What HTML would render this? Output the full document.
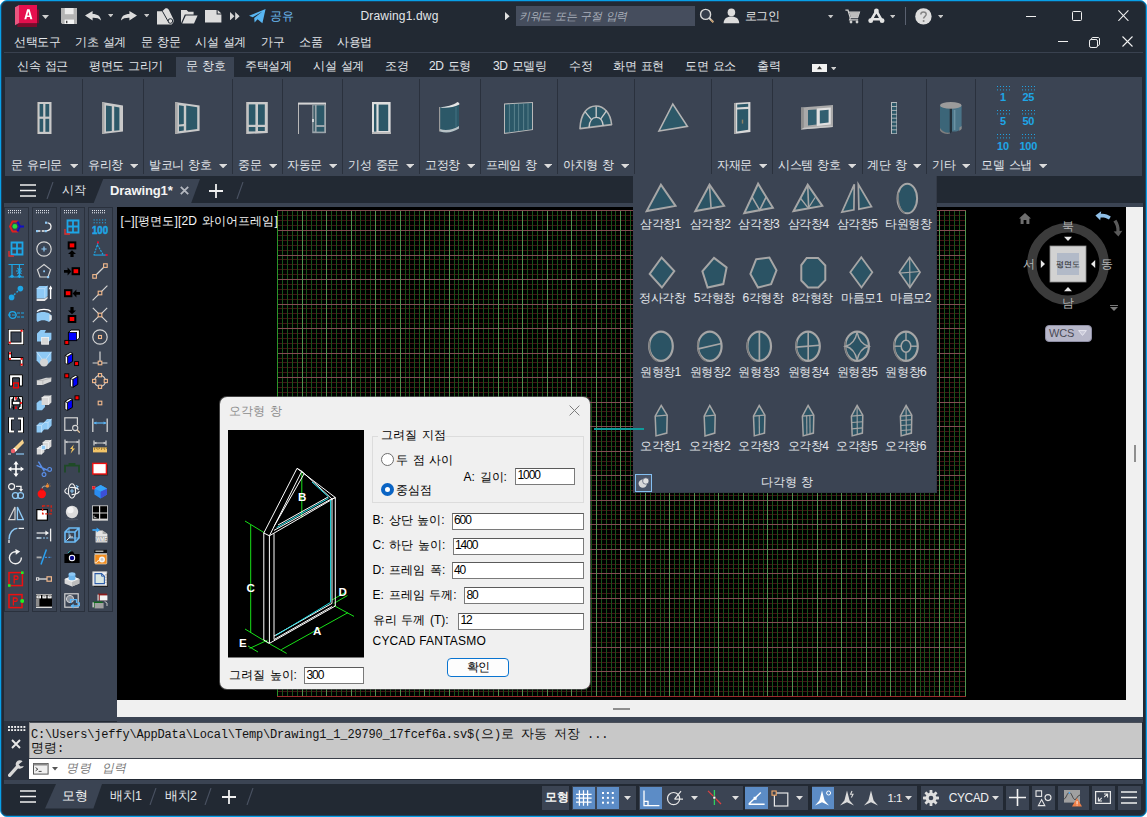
<!DOCTYPE html>
<html lang="ko"><head><meta charset="utf-8"><title>Drawing1.dwg</title>
<style>
html,body{margin:0;padding:0;width:1147px;height:817px;overflow:hidden;background:#fff}
body{font-family:"Liberation Sans",sans-serif;font-size:12px;color:#e3e6ea;position:relative}
#win{position:absolute;left:0;top:0;width:1147px;height:817px;box-sizing:border-box;border:1px solid #07a0e8;border-radius:7px;background:#222933;overflow:hidden;box-shadow:inset 0 0 0 1px #1b4463}
#win div,#win span,#win svg{position:absolute;white-space:nowrap;display:block}
#win i{font-style:normal}
#c{position:absolute;left:-1px;top:-1px;width:1147px;height:817px}
.k{letter-spacing:-0.45px;word-spacing:1.6px}
.m{font-family:"Liberation Mono",monospace}
</style></head>
<body><div id="win"><div id="c">
<!-- frame -->
<div style="left:5px;top:77px;width:1137px;height:98.5px;background:#3b4453;"></div>
<div style="left:4px;top:52px;width:1139px;height:1px;background:#39414f;"></div>
<div style="left:4px;top:202.5px;width:1139px;height:4.5px;background:#3b4453;"></div>
<div style="left:4px;top:207px;width:113px;height:514px;background:#3b4453;"></div>
<div style="left:1126px;top:207px;width:17px;height:510px;background:#f0f0f0;"></div>
<div style="left:117px;top:700px;width:1010px;height:17px;background:#f0f0f0;"></div>
<div style="left:1134px;top:445px;width:2px;height:17px;background:#8e8e8e;"></div>
<div style="left:613px;top:707.5px;width:17px;height:2px;background:#8e8e8e;"></div>
<div style="left:117px;top:717px;width:1026px;height:5px;background:#3b4453;"></div>
<div style="left:4px;top:779.8px;width:1139px;height:4px;background:#3b4453;"></div>
<!-- titlebar -->
<svg style="left:14px;top:4px;" width="26" height="24" viewBox="0 0 26 24"><path d="M3.3 19.2H25V5.5H23V23H3.3Z" fill="#7d0a2b"/><path d="M1 3.2L5 1V19L1 21.3Z" fill="#ea5680"/><rect x="5" y="1" width="18" height="18.2" fill="#e50f4e"/><path d="M10.3 15.2L13.1 5.3H15.6L18.4 15.2H16.3L15.75 13.1H12.9L12.35 15.2ZM13.3 11.5H15.35L14.35 7.6Z" fill="#fff"/></svg>
<svg style="left:41.8px;top:14.600000000000001px;" width="7" height="4" viewBox="0 0 7 4"><path d="M0 0H7L3.5 4Z" fill="#d0d0d0"/></svg>
<svg style="left:61px;top:8px;" width="16" height="16" viewBox="0 0 16 16"><path d="M0 0H16V16H1.2L0 14.8Z" fill="#b4b4b4"/><rect x="3.8" y="0" width="8.8" height="6.2" fill="#ececec"/><rect x="3.6" y="11.6" width="9.4" height="4.4" fill="#f4f4f4"/><rect x="5" y="12.8" width="1.4" height="2.4" fill="#444"/></svg>
<svg style="left:85px;top:10.6px;" width="16" height="10" viewBox="0 0 16 10"><path d="M0 4.6L7.6 0V3C12.5 3 15.6 5.2 16 9.4C14 7.3 11.5 6.6 7.6 6.7V9.6Z" fill="#dcdcdc"/></svg>
<svg style="left:107.7px;top:13.700000000000001px;" width="5.4" height="3.4" viewBox="0 0 5.4 3.4"><path d="M0 0H5.4L2.7 3.4Z" fill="#c8c8c8"/></svg>
<svg style="left:121px;top:10.6px;" width="16" height="10" viewBox="0 0 16 10"><g transform="translate(16,0) scale(-1,1)"><path d="M0 4.6L7.6 0V3C12.5 3 15.6 5.2 16 9.4C14 7.3 11.5 6.6 7.6 6.7V9.6Z" fill="#dcdcdc"/></g></svg>
<svg style="left:143.60000000000002px;top:13.700000000000001px;" width="5.4" height="3.4" viewBox="0 0 5.4 3.4"><path d="M0 0H5.4L2.7 3.4Z" fill="#c8c8c8"/></svg>
<svg style="left:157px;top:7.5px;" width="17" height="17" viewBox="0 0 17 17"><path d="M0 3.2H5.2L8.2 0.4C9.8 -0.2 11.2 0.6 11.8 1.8L16.2 10.8C17.2 13 16.6 15.2 14.6 16.4H0Z" fill="#dcdcdc"/><path d="M5.4 3.2L11 13.2" stroke="#222933" stroke-width="1" fill="none"/><circle cx="13.4" cy="13" r="2.3" fill="none" stroke="#222933" stroke-width="1"/><circle cx="13.6" cy="13.3" r="0.9" fill="#dcdcdc"/></svg>
<svg style="left:180.5px;top:9.6px;" width="17" height="14" viewBox="0 0 17 14"><path d="M0 13.2V0H5.6L7.4 1.8H12.6V4.4H3.8L0 13.2Z" fill="#dcdcdc"/><path d="M1.2 13.4L4.8 5.6H16.6L13 13.4Z" fill="#dcdcdc"/></svg>
<svg style="left:205px;top:9.6px;" width="17" height="13" viewBox="0 0 17 13"><path d="M0 0H11.6V4.6H16.4V12.6H0Z" fill="#dcdcdc"/><path d="M12.6 0L16.4 3.6H12.6Z" fill="#dcdcdc"/></svg>
<svg style="left:229.6px;top:12px;" width="10" height="8.4" viewBox="0 0 10 8.4"><path d="M0 0L4.4 4.2L0 8.4ZM5.2 0L9.6 4.2L5.2 8.4Z" fill="#d6d6d6"/></svg>
<svg style="left:249px;top:8.6px;" width="17" height="15" viewBox="0 0 17 15"><path d="M0 6.8L16.6 0L13.4 14.2L8.6 10.2L5.6 13.6L5.2 9L13.4 2.6L3.8 8.2Z" fill="#58b6f2"/></svg>
<span class="k" style="left:270px;top:8px;font-size:12px;line-height:16px;color:#6dbbf2;">공유</span>
<span style="left:339.5px;top:8px;width:120px;text-align:center;font-size:12px;line-height:16px;color:#e3e6ea;letter-spacing:0.17px">Drawing1.dwg</span>
<svg style="left:505px;top:11.8px;" width="5" height="8.4" viewBox="0 0 5 8.4"><path d="M0 0L4.6 4.2L0 8.4Z" fill="#e0e0e0"/></svg>
<div style="left:516px;top:6px;width:178.5px;height:20px;background:#454d5d;"></div>
<span class="k" style="left:520px;top:8px;font-size:11.1px;line-height:16px;color:#aab0bb;transform:skewX(-13deg);transform-origin:0 50%">키워드 또는 구절 입력</span>
<svg style="left:699px;top:8px;" width="16" height="16" viewBox="0 0 16 16"><circle cx="6.6" cy="6.4" r="5" fill="#353d4b" stroke="#d8d8d8" stroke-width="1.4"/><path d="M10.2 10L14.2 14" stroke="#d8d8d8" stroke-width="1.8"/><path d="M11.6 11.6L14.4 14.4" stroke="#c09868" stroke-width="1.6"/></svg>
<svg style="left:722.5px;top:8px;" width="17" height="16" viewBox="0 0 17 16"><circle cx="8.4" cy="4.4" r="3.8" fill="#dcdcdc"/><path d="M0.6 15.2C0.8 10.6 4 8.6 8.4 8.6C12.8 8.6 16 10.6 16.2 15.2Z" fill="#dcdcdc"/></svg>
<span class="k" style="left:744.5px;top:8px;font-size:12px;line-height:16px;color:#e8e8e8;">로그인</span>
<svg style="left:828.3px;top:14.7px;" width="5.4" height="3.4" viewBox="0 0 5.4 3.4"><path d="M0 0H5.4L2.7 3.4Z" fill="#c8c8c8"/></svg>
<svg style="left:845px;top:8.5px;" width="16" height="15" viewBox="0 0 16 15"><path d="M0.4 1.2H3L5.2 8.6H12.6L14.4 3.2H4" fill="none" stroke="#cfcfcf" stroke-width="1.3"/><path d="M4.6 3.2H14.4L12.8 8.4H5.6Z" fill="#bdbdbd"/><path d="M5.4 8.6L4.6 10.8H13.2" fill="none" stroke="#d0d0d0" stroke-width="1.2"/><circle cx="6" cy="13" r="1.4" fill="#d0d0d0"/><circle cx="12" cy="13" r="1.4" fill="#d0d0d0"/></svg>
<svg style="left:868px;top:8px;" width="17" height="16" viewBox="0 0 17 16"><path d="M2.8 12.6L8.4 3L14 12.6M4.6 11.2H12.2" fill="none" stroke="#e4e4e4" stroke-width="2.5" stroke-linejoin="round"/><circle cx="8.4" cy="2.9" r="2.4" fill="#e4e4e4"/><circle cx="2.7" cy="12.7" r="2.4" fill="#e4e4e4"/><circle cx="14.1" cy="12.7" r="2.4" fill="#e4e4e4"/></svg>
<svg style="left:889.8px;top:14.7px;" width="5.4" height="3.4" viewBox="0 0 5.4 3.4"><path d="M0 0H5.4L2.7 3.4Z" fill="#c8c8c8"/></svg>
<div style="left:905px;top:7px;width:1px;height:18px;background:#5a6170;"></div>
<svg style="left:914.5px;top:7.6px;" width="17" height="17" viewBox="0 0 17 17"><circle cx="8.4" cy="8.4" r="8.2" fill="#dedede"/><path d="M5.8 6.6C5.8 4.8 7 3.9 8.5 3.9C10 3.9 11.2 4.8 11.2 6.3C11.2 8.3 8.6 8.4 8.6 10.6" fill="none" stroke="#858585" stroke-width="1.5"/><circle cx="8.6" cy="13" r="1" fill="#858585"/></svg>
<svg style="left:938.0px;top:14.7px;" width="5.4" height="3.4" viewBox="0 0 5.4 3.4"><path d="M0 0H5.4L2.7 3.4Z" fill="#c8c8c8"/></svg>
<div style="left:1026px;top:15.5px;width:10px;height:1px;background:#f0f0f0;"></div>
<div style="left:1072px;top:11px;width:10px;height:10px;background:transparent;box-sizing:border-box;border:1px solid #f0f0f0;border-radius:1.5px"></div>
<svg style="left:1117.6px;top:10.2px;" width="11" height="11" viewBox="0 0 11 11"><path d="M0.4 0.4L10.4 10.8M10.4 0.4L0.4 10.8" stroke="#f0f0f0" stroke-width="1.1"/></svg>
<div style="left:1057.5px;top:41px;width:10px;height:1px;background:#f0f0f0;"></div>
<svg style="left:1089px;top:36.5px;" width="11" height="11" viewBox="0 0 11 11"><rect x="0.5" y="2.5" width="8" height="8" rx="1.6" fill="none" stroke="#f0f0f0" stroke-width="1"/><path d="M2.5 2.3V1.8C2.5 1 3 0.5 3.8 0.5H9C9.9 0.5 10.5 1.1 10.5 2V7.2C10.5 8 10 8.5 9.2 8.5H8.7" fill="none" stroke="#f0f0f0" stroke-width="1"/></svg>
<svg style="left:1121.5px;top:36px;" width="11" height="11" viewBox="0 0 11 11"><path d="M0.5 0.5L10.5 10.5M10.5 0.5L0.5 10.5" stroke="#f0f0f0" stroke-width="1.1"/></svg>
<span class="k" style="left:14px;top:34px;font-size:12px;line-height:16px;color:#e3e6ea;">선택도구</span>
<span class="k" style="left:75px;top:34px;font-size:12px;line-height:16px;color:#e3e6ea;">기초 설계</span>
<span class="k" style="left:141px;top:34px;font-size:12px;line-height:16px;color:#e3e6ea;">문 창문</span>
<span class="k" style="left:195px;top:34px;font-size:12px;line-height:16px;color:#e3e6ea;">시설 설계</span>
<span class="k" style="left:261px;top:34px;font-size:12px;line-height:16px;color:#e3e6ea;">가구</span>
<span class="k" style="left:299px;top:34px;font-size:12px;line-height:16px;color:#e3e6ea;">소품</span>
<span class="k" style="left:337px;top:34px;font-size:12px;line-height:16px;color:#e3e6ea;">사용법</span>
<!-- ribbon -->
<div style="left:176px;top:57px;width:57.5px;height:21px;background:#3b4453;"></div>
<span class="k" style="left:17px;top:58px;font-size:12px;line-height:16px;color:#e3e6ea;">신속 접근</span>
<span class="k" style="left:89px;top:58px;font-size:12px;line-height:16px;color:#e3e6ea;">평면도 그리기</span>
<span class="k" style="left:186px;top:58px;font-size:12px;line-height:16px;color:#e3e6ea;">문 창호</span>
<span class="k" style="left:245px;top:58px;font-size:12px;line-height:16px;color:#e3e6ea;">주택설계</span>
<span class="k" style="left:313px;top:58px;font-size:12px;line-height:16px;color:#e3e6ea;">시설 설계</span>
<span class="k" style="left:385px;top:58px;font-size:12px;line-height:16px;color:#e3e6ea;">조경</span>
<span class="k" style="left:429px;top:58px;font-size:12px;line-height:16px;color:#e3e6ea;">2D 도형</span>
<span class="k" style="left:493px;top:58px;font-size:12px;line-height:16px;color:#e3e6ea;">3D 모델링</span>
<span class="k" style="left:569px;top:58px;font-size:12px;line-height:16px;color:#e3e6ea;">수정</span>
<span class="k" style="left:613px;top:58px;font-size:12px;line-height:16px;color:#e3e6ea;">화면 표현</span>
<span class="k" style="left:685px;top:58px;font-size:12px;line-height:16px;color:#e3e6ea;">도면 요소</span>
<span class="k" style="left:757px;top:58px;font-size:12px;line-height:16px;color:#e3e6ea;">출력</span>
<div style="left:812px;top:64px;width:15px;height:8px;background:#f2f2f2;"></div>
<svg style="left:817px;top:66.4px;" width="5" height="3.2" viewBox="0 0 5 3.2"><path d="M0 3.2L2.5 0L5 3.2Z" fill="#333"/></svg>
<svg style="left:830.5999999999999px;top:66.5px;" width="5.4" height="3.4" viewBox="0 0 5.4 3.4"><path d="M0 0H5.4L2.7 3.4Z" fill="#d0d0d0"/></svg>
<div style="left:82px;top:79px;width:1px;height:95px;background:#2a313d;"></div>
<div style="left:143px;top:79px;width:1px;height:95px;background:#2a313d;"></div>
<div style="left:232px;top:79px;width:1px;height:95px;background:#2a313d;"></div>
<div style="left:282px;top:79px;width:1px;height:95px;background:#2a313d;"></div>
<div style="left:342px;top:79px;width:1px;height:95px;background:#2a313d;"></div>
<div style="left:419px;top:79px;width:1px;height:95px;background:#2a313d;"></div>
<div style="left:480px;top:79px;width:1px;height:95px;background:#2a313d;"></div>
<div style="left:557px;top:79px;width:1px;height:95px;background:#2a313d;"></div>
<div style="left:634px;top:79px;width:1px;height:95px;background:#2a313d;"></div>
<div style="left:711px;top:79px;width:1px;height:95px;background:#2a313d;"></div>
<div style="left:772px;top:79px;width:1px;height:95px;background:#2a313d;"></div>
<div style="left:861.5px;top:79px;width:1px;height:95px;background:#2a313d;"></div>
<div style="left:926px;top:79px;width:1px;height:95px;background:#2a313d;"></div>
<div style="left:975px;top:79px;width:1px;height:95px;background:#2a313d;"></div>
<span class="k" style="left:11px;top:156.5px;font-size:12px;line-height:16px;color:#e3e6ea;">문 유리문</span>
<svg style="left:70.0px;top:163.8px;" width="8.2" height="4.4" viewBox="0 0 8.2 4.4"><path d="M0 0H8.2L4.1 4.4Z" fill="#dcdcdc"/></svg>
<span class="k" style="left:88px;top:156.5px;font-size:12px;line-height:16px;color:#e3e6ea;">유리창</span>
<svg style="left:130.0px;top:163.8px;" width="8.2" height="4.4" viewBox="0 0 8.2 4.4"><path d="M0 0H8.2L4.1 4.4Z" fill="#dcdcdc"/></svg>
<span class="k" style="left:149px;top:156.5px;font-size:12px;line-height:16px;color:#e3e6ea;">발코니 창호</span>
<svg style="left:219.0px;top:163.8px;" width="8.2" height="4.4" viewBox="0 0 8.2 4.4"><path d="M0 0H8.2L4.1 4.4Z" fill="#dcdcdc"/></svg>
<span class="k" style="left:238px;top:156.5px;font-size:12px;line-height:16px;color:#e3e6ea;">중문</span>
<svg style="left:269.0px;top:163.8px;" width="8.2" height="4.4" viewBox="0 0 8.2 4.4"><path d="M0 0H8.2L4.1 4.4Z" fill="#dcdcdc"/></svg>
<span class="k" style="left:287px;top:156.5px;font-size:12px;line-height:16px;color:#e3e6ea;">자동문</span>
<svg style="left:329.0px;top:163.8px;" width="8.2" height="4.4" viewBox="0 0 8.2 4.4"><path d="M0 0H8.2L4.1 4.4Z" fill="#dcdcdc"/></svg>
<span class="k" style="left:348px;top:156.5px;font-size:12px;line-height:16px;color:#e3e6ea;">기성 중문</span>
<svg style="left:406.0px;top:163.8px;" width="8.2" height="4.4" viewBox="0 0 8.2 4.4"><path d="M0 0H8.2L4.1 4.4Z" fill="#dcdcdc"/></svg>
<span class="k" style="left:425px;top:156.5px;font-size:12px;line-height:16px;color:#e3e6ea;">고정창</span>
<svg style="left:467.0px;top:163.8px;" width="8.2" height="4.4" viewBox="0 0 8.2 4.4"><path d="M0 0H8.2L4.1 4.4Z" fill="#dcdcdc"/></svg>
<span class="k" style="left:486px;top:156.5px;font-size:12px;line-height:16px;color:#e3e6ea;">프레임 창</span>
<svg style="left:544.0px;top:163.8px;" width="8.2" height="4.4" viewBox="0 0 8.2 4.4"><path d="M0 0H8.2L4.1 4.4Z" fill="#dcdcdc"/></svg>
<span class="k" style="left:563px;top:156.5px;font-size:12px;line-height:16px;color:#e3e6ea;">아치형 창</span>
<svg style="left:621.0px;top:163.8px;" width="8.2" height="4.4" viewBox="0 0 8.2 4.4"><path d="M0 0H8.2L4.1 4.4Z" fill="#dcdcdc"/></svg>
<span class="k" style="left:717px;top:156.5px;font-size:12px;line-height:16px;color:#e3e6ea;">자재문</span>
<svg style="left:759.0px;top:163.8px;" width="8.2" height="4.4" viewBox="0 0 8.2 4.4"><path d="M0 0H8.2L4.1 4.4Z" fill="#dcdcdc"/></svg>
<span class="k" style="left:778px;top:156.5px;font-size:12px;line-height:16px;color:#e3e6ea;">시스템 창호</span>
<svg style="left:848.0px;top:163.8px;" width="8.2" height="4.4" viewBox="0 0 8.2 4.4"><path d="M0 0H8.2L4.1 4.4Z" fill="#dcdcdc"/></svg>
<span class="k" style="left:867px;top:156.5px;font-size:12px;line-height:16px;color:#e3e6ea;">계단 창</span>
<svg style="left:913.0px;top:163.8px;" width="8.2" height="4.4" viewBox="0 0 8.2 4.4"><path d="M0 0H8.2L4.1 4.4Z" fill="#dcdcdc"/></svg>
<span class="k" style="left:932px;top:156.5px;font-size:12px;line-height:16px;color:#e3e6ea;">기타</span>
<svg style="left:962.0px;top:163.8px;" width="8.2" height="4.4" viewBox="0 0 8.2 4.4"><path d="M0 0H8.2L4.1 4.4Z" fill="#dcdcdc"/></svg>
<span class="k" style="left:981px;top:156.5px;font-size:12px;line-height:16px;color:#e3e6ea;">모델 스냅</span>
<svg style="left:1039.0px;top:163.8px;" width="8.2" height="4.4" viewBox="0 0 8.2 4.4"><path d="M0 0H8.2L4.1 4.4Z" fill="#dcdcdc"/></svg>
<svg style="left:37px;top:102px;" width="15" height="32" viewBox="0 0 15 32"><rect x="0.5" y="0" width="14" height="32" fill="#c9c9c9"/><rect x="0" y="0" width="1" height="32" fill="#8a8a8a"/><rect x="2.6" y="2" width="3.6" height="12.6" fill="#2c5868"/><rect x="8.4" y="2" width="3.8" height="12.6" fill="#2c5868"/><rect x="2.6" y="16.8" width="3.6" height="13" fill="#2c5868"/><rect x="8.4" y="16.8" width="3.8" height="13" fill="#2c5868"/></svg>
<svg style="left:102px;top:102px;" width="21" height="32" viewBox="0 0 21 32"><path d="M0 0L21 3.4V29.4L0 32Z" fill="#c9c9c9"/><path d="M0 0L2.4 0.6V31.4L0 32Z" fill="#a8a8a8"/><path d="M4 3.4L9.8 4.2V29L4 29.6Z" fill="#2c5868"/><path d="M12.2 4.6L17.4 5.4V28.2L12.2 28.8Z" fill="#2c5868"/></svg>
<svg style="left:175px;top:102px;" width="25" height="32" viewBox="0 0 25 32"><path d="M0 0L24.6 3.6V28.8L0 32Z" fill="#c9c9c9"/><path d="M0 0L2.6 0.6V31.4L0 32Z" fill="#a8a8a8"/><path d="M4 3.2L8.8 3.9V22L4 22.4Z" fill="#2c5868"/><path d="M4 24.4L8.8 24.2V28.6L4 29.2Z" fill="#2c5868"/><path d="M11.2 3.4L22.2 5.2V27L11.2 28.6Z" fill="#2c5868"/></svg>
<svg style="left:246px;top:102px;" width="22" height="32" viewBox="0 0 22 32"><path d="M0 0H21.8V31L0 32Z" fill="#c9c9c9"/><path d="M0 0H1.2V32H0Z" fill="#a8a8a8"/><rect x="2.8" y="2.4" width="6.6" height="20.4" fill="#2c5868"/><rect x="12" y="2.4" width="6.8" height="20.4" fill="#2c5868"/><rect x="2.8" y="25" width="6.6" height="4.4" fill="#2c5868"/><rect x="12" y="25" width="6.8" height="4" fill="#2c5868"/></svg>
<svg style="left:298px;top:102px;" width="28" height="32" viewBox="0 0 28 32"><path d="M0.5 32V1.4H27.6V31" fill="none" stroke="#b8b8b8" stroke-width="1"/><rect x="0" y="0.6" width="28" height="2" fill="#d4d4d4"/><rect x="14.2" y="2.6" width="13.4" height="28.6" fill="#9aa4aa"/><rect x="18.6" y="3.4" width="7.6" height="19.6" fill="#2c5868"/><rect x="18.6" y="25" width="7.6" height="4.6" fill="#2c5868"/><rect x="15.4" y="3.4" width="1.6" height="26" fill="#41606c"/><rect x="14.2" y="17" width="1.6" height="3" fill="#e8e8e8"/></svg>
<svg style="left:372px;top:102px;" width="19" height="32" viewBox="0 0 19 32"><rect x="0" y="0" width="18.6" height="32" fill="#dedede"/><rect x="2" y="2.2" width="2.4" height="27.4" fill="#2c5868"/><rect x="6.6" y="2.6" width="9.6" height="26.4" fill="#2c5868"/><rect x="0" y="30" width="18.6" height="2" fill="#bcbcbc"/></svg>
<svg style="left:439px;top:102px;" width="21" height="32" viewBox="0 0 21 32"><path d="M1 5.2C7 4.8 14 3.4 20 1.2V26.4C15 29.6 8 31.4 1 29.4Z" fill="#2c5868"/><path d="M1 5.2C7 4.8 14 3.4 18.4 0C20 0.4 20.6 1.4 20.4 2.6C14 5.6 6 6.6 1 5.2Z" fill="#e4e4e4"/><path d="M1 27C7 29 14 27.6 20 24V26.6C15 30 8 31.8 1 29.6Z" fill="#b8c2c6"/><path d="M0.6 5V29.4" stroke="#9a9a9a" stroke-width="1.2"/><path d="M17 5V25" stroke="#4a7a8a" stroke-width="0.8"/></svg>
<svg style="left:504px;top:102px;" width="29" height="32" viewBox="0 0 29 32"><path d="M0 1.4L29 0V28L0 32Z" fill="#b9b9b9"/><path d="M1 2.4L28 1V27.2L1 30.8Z" fill="#2c5868"/><path d="M5.4 2.13V30.098" stroke="#6f929c" stroke-width="0.7"/><path d="M10.4 1.88V29.448" stroke="#6f929c" stroke-width="0.7"/><path d="M14.6 1.67V28.902" stroke="#6f929c" stroke-width="0.7"/><path d="M19.6 1.42V28.252" stroke="#6f929c" stroke-width="0.7"/><path d="M24 1.2V27.68" stroke="#6f929c" stroke-width="0.7"/></svg>
<svg style="left:579px;top:105px;" width="34" height="25" viewBox="0 0 34 25"><path d="M1 23.6C1.6 9 8 1 17 1C25 1 31.6 8 32.6 19.6Z" fill="#2c5868" stroke="#b2b2b2" stroke-width="1.6" stroke-linejoin="round"/><path d="M10 22.6C10.4 15.4 13.6 12.4 17.4 12.4C21 12.4 23.6 15 24.2 20.8" fill="none" stroke="#c9c9c9" stroke-width="1.4"/><path d="M17.2 1.6V12.4M6 6.6L12.4 14.6M27.6 5.6L21.8 13.8" stroke="#c9c9c9" stroke-width="1.4"/></svg>
<svg style="left:656px;top:101px;" width="35" height="33" viewBox="0 0 35 33"><path d="M16.8 3L3 30L31.4 25.4Z" fill="#2c5868" stroke="#b4b4b4" stroke-width="1.6" stroke-linejoin="miter"/></svg>
<svg style="left:734px;top:102px;" width="17" height="32" viewBox="0 0 17 32"><path d="M0 1L16.4 0V30L0 32Z" fill="#d8d8d8"/><path d="M0 1L2 0.9V31.8L0 32Z" fill="#a6a6a6"/><path d="M3.2 2.6L14.2 1.8V4.8L3.2 5.4Z" fill="#2c5868"/><path d="M3.2 7.6L14.2 7V27.8L3.2 29.4Z" fill="#2c5868"/><rect x="7.8" y="17.6" width="1.4" height="4" fill="#8d8266"/></svg>
<svg style="left:801px;top:105px;" width="32" height="25" viewBox="0 0 32 25"><path d="M0 2.4L32 0V22L0 24.6Z" fill="#a9a9a9"/><path d="M0 2.4L2.8 3.2V23L0 24.6Z" fill="#8e8e8e"/><path d="M0 24.6L32 22L30 20.6L2.8 22.8Z" fill="#c6c6c6"/><path d="M7 5L15.6 4.4V19.6L7 20.4Z" fill="#315f70"/><path d="M15.8 3.4L29.8 2.6V19.4L15.8 21Z" fill="#e0e0e0"/><path d="M18.8 5.4L27.6 4.8V17.6L18.8 18.6Z" fill="#315f70"/></svg>
<svg style="left:891px;top:102px;" width="6.4" height="32" viewBox="0 0 6.4 32"><rect x="0" y="0" width="6.4" height="32" fill="#b8bcbf"/><rect x="1" y="1" width="4.4" height="3" fill="#2c5868"/><rect x="1" y="4.9" width="4.4" height="3" fill="#2c5868"/><rect x="1" y="8.8" width="4.4" height="3" fill="#2c5868"/><rect x="1" y="12.7" width="4.4" height="3" fill="#2c5868"/><rect x="1" y="16.6" width="4.4" height="3" fill="#2c5868"/><rect x="1" y="20.5" width="4.4" height="3" fill="#2c5868"/><rect x="1" y="24.4" width="4.4" height="3" fill="#2c5868"/><rect x="1" y="28.3" width="4.4" height="3" fill="#2c5868"/></svg>
<svg style="left:940px;top:102px;" width="22" height="32" viewBox="0 0 22 32"><path d="M0 3.4V27C3 31.4 8.6 31.6 9.8 31.6V5Z" fill="#3b6578"/><path d="M9.8 5V31.6C11.4 31 11.6 30 12 29V5Z" fill="#23303a"/><path d="M12 5V29.4C16 30 19.6 28.6 21.6 26.4V3.4Z" fill="#4a7488"/><ellipse cx="10.8" cy="3.4" rx="10.8" ry="3.3" fill="#9b9b9b"/><path d="M0 26C2 29.6 6 31 9.8 30.6V31.8C5 32.4 1.6 30.8 0 28.4Z" fill="#7e7e7e"/><path d="M14.6 8V28" stroke="#6b92a3" stroke-width="1.6"/><path d="M19.4 25.6L21.6 24V27L19.4 29Z" fill="#8a8a8a"/></svg>
<svg style="left:996.5px;top:85.5px;" width="13.5" height="5" viewBox="0 0 13.5 5"><rect x="0" y="0" width="1" height="1" fill="#1ea6e6"/><rect x="0" y="3.4" width="1" height="1" fill="#1ea6e6"/><rect x="3" y="0" width="1" height="1" fill="#1ea6e6"/><rect x="3" y="3.4" width="1" height="1" fill="#1ea6e6"/><rect x="6" y="0" width="1" height="1" fill="#1ea6e6"/><rect x="6" y="3.4" width="1" height="1" fill="#1ea6e6"/><rect x="9" y="0" width="1" height="1" fill="#1ea6e6"/><rect x="9" y="3.4" width="1" height="1" fill="#1ea6e6"/><rect x="12" y="0" width="1" height="1" fill="#1ea6e6"/><rect x="12" y="3.4" width="1" height="1" fill="#1ea6e6"/></svg>
<span style="left:988px;top:90.9px;width:30px;text-align:center;font-size:11px;line-height:12px;color:#1ea6e6;font-weight:bold;letter-spacing:-0.2px">1</span>
<svg style="left:1021.8px;top:85.5px;" width="13.5" height="5" viewBox="0 0 13.5 5"><rect x="0" y="0" width="1" height="1" fill="#1ea6e6"/><rect x="0" y="3.4" width="1" height="1" fill="#1ea6e6"/><rect x="3" y="0" width="1" height="1" fill="#1ea6e6"/><rect x="3" y="3.4" width="1" height="1" fill="#1ea6e6"/><rect x="6" y="0" width="1" height="1" fill="#1ea6e6"/><rect x="6" y="3.4" width="1" height="1" fill="#1ea6e6"/><rect x="9" y="0" width="1" height="1" fill="#1ea6e6"/><rect x="9" y="3.4" width="1" height="1" fill="#1ea6e6"/><rect x="12" y="0" width="1" height="1" fill="#1ea6e6"/><rect x="12" y="3.4" width="1" height="1" fill="#1ea6e6"/></svg>
<span style="left:1013.3px;top:90.9px;width:30px;text-align:center;font-size:11px;line-height:12px;color:#1ea6e6;font-weight:bold;letter-spacing:-0.2px">25</span>
<svg style="left:996.5px;top:109.9px;" width="13.5" height="5" viewBox="0 0 13.5 5"><rect x="0" y="0" width="1" height="1" fill="#1ea6e6"/><rect x="0" y="3.4" width="1" height="1" fill="#1ea6e6"/><rect x="3" y="0" width="1" height="1" fill="#1ea6e6"/><rect x="3" y="3.4" width="1" height="1" fill="#1ea6e6"/><rect x="6" y="0" width="1" height="1" fill="#1ea6e6"/><rect x="6" y="3.4" width="1" height="1" fill="#1ea6e6"/><rect x="9" y="0" width="1" height="1" fill="#1ea6e6"/><rect x="9" y="3.4" width="1" height="1" fill="#1ea6e6"/><rect x="12" y="0" width="1" height="1" fill="#1ea6e6"/><rect x="12" y="3.4" width="1" height="1" fill="#1ea6e6"/></svg>
<span style="left:988px;top:115.3px;width:30px;text-align:center;font-size:11px;line-height:12px;color:#1ea6e6;font-weight:bold;letter-spacing:-0.2px">5</span>
<svg style="left:1021.8px;top:109.9px;" width="13.5" height="5" viewBox="0 0 13.5 5"><rect x="0" y="0" width="1" height="1" fill="#1ea6e6"/><rect x="0" y="3.4" width="1" height="1" fill="#1ea6e6"/><rect x="3" y="0" width="1" height="1" fill="#1ea6e6"/><rect x="3" y="3.4" width="1" height="1" fill="#1ea6e6"/><rect x="6" y="0" width="1" height="1" fill="#1ea6e6"/><rect x="6" y="3.4" width="1" height="1" fill="#1ea6e6"/><rect x="9" y="0" width="1" height="1" fill="#1ea6e6"/><rect x="9" y="3.4" width="1" height="1" fill="#1ea6e6"/><rect x="12" y="0" width="1" height="1" fill="#1ea6e6"/><rect x="12" y="3.4" width="1" height="1" fill="#1ea6e6"/></svg>
<span style="left:1013.3px;top:115.3px;width:30px;text-align:center;font-size:11px;line-height:12px;color:#1ea6e6;font-weight:bold;letter-spacing:-0.2px">50</span>
<svg style="left:996.5px;top:134.3px;" width="13.5" height="5" viewBox="0 0 13.5 5"><rect x="0" y="0" width="1" height="1" fill="#1ea6e6"/><rect x="0" y="3.4" width="1" height="1" fill="#1ea6e6"/><rect x="3" y="0" width="1" height="1" fill="#1ea6e6"/><rect x="3" y="3.4" width="1" height="1" fill="#1ea6e6"/><rect x="6" y="0" width="1" height="1" fill="#1ea6e6"/><rect x="6" y="3.4" width="1" height="1" fill="#1ea6e6"/><rect x="9" y="0" width="1" height="1" fill="#1ea6e6"/><rect x="9" y="3.4" width="1" height="1" fill="#1ea6e6"/><rect x="12" y="0" width="1" height="1" fill="#1ea6e6"/><rect x="12" y="3.4" width="1" height="1" fill="#1ea6e6"/></svg>
<span style="left:988px;top:139.7px;width:30px;text-align:center;font-size:11px;line-height:12px;color:#1ea6e6;font-weight:bold;letter-spacing:-0.2px">10</span>
<svg style="left:1021.8px;top:134.3px;" width="13.5" height="5" viewBox="0 0 13.5 5"><rect x="0" y="0" width="1" height="1" fill="#1ea6e6"/><rect x="0" y="3.4" width="1" height="1" fill="#1ea6e6"/><rect x="3" y="0" width="1" height="1" fill="#1ea6e6"/><rect x="3" y="3.4" width="1" height="1" fill="#1ea6e6"/><rect x="6" y="0" width="1" height="1" fill="#1ea6e6"/><rect x="6" y="3.4" width="1" height="1" fill="#1ea6e6"/><rect x="9" y="0" width="1" height="1" fill="#1ea6e6"/><rect x="9" y="3.4" width="1" height="1" fill="#1ea6e6"/><rect x="12" y="0" width="1" height="1" fill="#1ea6e6"/><rect x="12" y="3.4" width="1" height="1" fill="#1ea6e6"/></svg>
<span style="left:1013.3px;top:139.7px;width:30px;text-align:center;font-size:11px;line-height:12px;color:#1ea6e6;font-weight:bold;letter-spacing:-0.2px">100</span>
<!-- doctabs -->
<svg style="left:93px;top:178.5px;" width="108" height="24.5" viewBox="0 0 108 24.5"><path d="M0.5 24.5L10.2 0H107L98 24.5Z" fill="#3b4453"/></svg>
<svg style="left:20px;top:184.0px;" width="16" height="13" viewBox="0 0 16 13"><path d="M0 1H16M0 6.5H16M0 12H16" stroke="#f0f0f0" stroke-width="1.7"/></svg>
<svg style="left:46.0px;top:182.0px;" width="8" height="17" viewBox="0 0 8 17"><path d="M7 0L1 17" stroke="#4a5262" stroke-width="1.1"/></svg>
<span class="k" style="left:62px;top:182px;font-size:12px;line-height:16px;color:#e3e6ea;">시작</span>
<span style="left:110px;top:182.5px;font-size:13px;line-height:16px;color:#f4f4f4;font-weight:bold;letter-spacing:-0.1px">Drawing1*</span>
<svg style="left:179.5px;top:186px;" width="9" height="9" viewBox="0 0 9 9"><path d="M0.8 0.8L8.2 8.2M8.2 0.8L0.8 8.2" stroke="#b4b8c0" stroke-width="1.8"/></svg>
<svg style="left:208.7px;top:183.5px;" width="14" height="14" viewBox="0 0 14 14"><path d="M7.0 0V14M0 7.0H14" stroke="#f0f0f0" stroke-width="1.8"/></svg>
<svg style="left:236.0px;top:182.0px;" width="8" height="17" viewBox="0 0 8 17"><path d="M7 0L1 17" stroke="#4a5262" stroke-width="1.1"/></svg>
<!-- lefttools -->
<div style="left:4px;top:207px;width:24.5px;height:404.5px;background:#3b4453;box-sizing:border-box;border:1px solid #2a313d"></div>
<svg style="left:7.8px;top:210.2px;" width="14" height="4" viewBox="0 0 14 4"><rect x="0" y="0" width="1" height="1.1" fill="#dfe3ea"/><rect x="0" y="2.2" width="1" height="1.1" fill="#dfe3ea"/><rect x="2" y="0" width="1" height="1.1" fill="#dfe3ea"/><rect x="2" y="2.2" width="1" height="1.1" fill="#dfe3ea"/><rect x="4" y="0" width="1" height="1.1" fill="#dfe3ea"/><rect x="4" y="2.2" width="1" height="1.1" fill="#dfe3ea"/><rect x="6" y="0" width="1" height="1.1" fill="#dfe3ea"/><rect x="6" y="2.2" width="1" height="1.1" fill="#dfe3ea"/><rect x="8" y="0" width="1" height="1.1" fill="#dfe3ea"/><rect x="8" y="2.2" width="1" height="1.1" fill="#dfe3ea"/><rect x="10" y="0" width="1" height="1.1" fill="#dfe3ea"/><rect x="10" y="2.2" width="1" height="1.1" fill="#dfe3ea"/><rect x="12" y="0" width="1" height="1.1" fill="#dfe3ea"/><rect x="12" y="2.2" width="1" height="1.1" fill="#dfe3ea"/></svg>
<svg style="left:7.9px;top:219px;" width="16" height="16" viewBox="0 0 16 16"><path d="M4.6 2.4H9.4L12 7.4L9.4 12.6H4.6L2 7.4Z" fill="none" stroke="#e02020" stroke-width="2"/><path d="M9.4 2.6L12 7.4L9.4 12.4" fill="none" stroke="#1010c0" stroke-width="2.2"/><path d="M11 7.6H16" fill="none" stroke="#1010c0" stroke-width="2"/><circle cx="6.8" cy="7.4" r="2.4" fill="#20e040"/></svg>
<svg style="left:7.9px;top:241px;" width="16" height="16" viewBox="0 0 16 16"><path d="M3.5 1.5H14.5V13.5H3.5ZM9 1.5V13.5M3.5 7.5H14.5" fill="none" stroke="#1ea6e6" stroke-width="1.8"/><path d="M1 10V15H6" fill="none" stroke="#e03030" stroke-width="1.4"/></svg>
<svg style="left:7.9px;top:263px;" width="16" height="16" viewBox="0 0 16 16"><path d="M0.5 1.5H16M4 1.5V15M11.4 1.5V15M0.5 14H16M8 8H14M2 14.2L4 12L6 14.2M9.4 14.2L11.4 12L13.4 14.2M9.4 5L11.4 7.6L13.4 5M9.4 11L11.4 8.4L13.4 11" fill="none" stroke="#1ea6e6" stroke-width="1.2"/></svg>
<svg style="left:7.9px;top:285px;" width="16" height="16" viewBox="0 0 16 16"><circle cx="3.6" cy="12.4" r="2.8" fill="#1ea6e6"/><circle cx="12.4" cy="3.6" r="2.8" fill="#1ea6e6"/><path d="M6 10L10 6" stroke="#1ea6e6" stroke-width="1.4" stroke-dasharray="2 1.6"/></svg>
<svg style="left:7.9px;top:307px;" width="16" height="16" viewBox="0 0 16 16"><circle cx="4.6" cy="8" r="3.4" fill="none" stroke="#1ea6e6" stroke-width="1.3"/><path d="M0 8H9M9 6H16M9 10H16" stroke="#1ea6e6" stroke-width="1.2" stroke-dasharray="3 1"/></svg>
<svg style="left:7.9px;top:329px;" width="16" height="16" viewBox="0 0 16 16"><rect x="1.6" y="1.6" width="12.8" height="12.8" fill="none" stroke="#000" stroke-width="3.4"/><rect x="1.6" y="1.6" width="12.8" height="12.8" fill="none" stroke="#fff" stroke-width="1.8"/><rect x="12.6" y="0.8" width="2" height="2" fill="#ff0000"/><rect x="0.8" y="12.6" width="2" height="2" fill="#ff0000"/></svg>
<svg style="left:7.9px;top:351px;" width="16" height="16" viewBox="0 0 16 16"><path d="M2 0.8V7.8H13.6V15" fill="none" stroke="#000" stroke-width="3.4"/><path d="M2 0.8V7.8H13.6V15" fill="none" stroke="#fff" stroke-width="1.8"/><rect x="1" y="1.4" width="2" height="2" fill="#ff0000"/><rect x="1" y="6.8" width="2" height="2" fill="#ff0000"/><rect x="12.6" y="6.8" width="2" height="2" fill="#ff0000"/><rect x="12.6" y="12.6" width="2" height="2" fill="#ff0000"/></svg>
<svg style="left:7.9px;top:373px;" width="16" height="16" viewBox="0 0 16 16"><path d="M1.6 13V1.8H14.4V13H11.4V4.8H4.6V13Z" fill="#fff" stroke="#000" stroke-width="1"/><rect x="5.6" y="10" width="4.8" height="4.8" fill="none" stroke="#ff0000" stroke-width="1.3"/></svg>
<svg style="left:7.9px;top:395px;" width="16" height="16" viewBox="0 0 16 16"><path d="M1.6 14.4V1.6H14.4V14.4H10.4V12H12V4H10.4V1.6M5.6 1.6V4H4V12H5.6V14.4Z" fill="#fff" stroke="#000" stroke-width="1"/><rect x="4.4" y="6.2" width="7.6" height="3.6" fill="#fff" stroke="#000" stroke-width="1"/><rect x="7.2" y="2" width="1.6" height="2.6" fill="#ff0000"/><rect x="7.2" y="11.4" width="1.6" height="2.6" fill="#ff0000"/><rect x="12.2" y="7" width="1.6" height="2" fill="#ff0000"/></svg>
<svg style="left:7.9px;top:417px;" width="16" height="16" viewBox="0 0 16 16"><path d="M6 1.4H2V14.6H6M10 1.4H14V14.6H10" fill="none" stroke="#000" stroke-width="3.6"/><path d="M6 1.4H2V14.6H6M10 1.4H14V14.6H10" fill="none" stroke="#fff" stroke-width="2"/></svg>
<svg style="left:7.9px;top:439px;" width="16" height="16" viewBox="0 0 16 16"><path d="M14.6 0.6L16 4L7.6 12.4L4.4 10.6Z" fill="#f6d18c"/><path d="M6.4 8.8L9.2 11L7.4 12.8L4.2 10.8Z" fill="#fff"/><circle cx="5" cy="12" r="2.2" fill="#f0606a"/><path d="M0 15H3" stroke="#ddd" stroke-width="1"/><path d="M8 15H16" stroke="#8ec9f5" stroke-width="1.2"/></svg>
<svg style="left:7.9px;top:461px;" width="16" height="16" viewBox="0 0 16 16"><path d="M8 0L10.6 3.4H8.8V7.2H12.6V5.4L16 8L12.6 10.6V8.8H8.8V12.6H10.6L8 16L5.4 12.6H7.2V8.8H3.4V10.6L0 8L3.4 5.4V7.2H7.2V3.4H5.4Z" fill="#fff"/></svg>
<svg style="left:7.9px;top:483px;" width="16" height="16" viewBox="0 0 16 16"><circle cx="3.6" cy="3.6" r="3" fill="none" stroke="#f0f0f0" stroke-width="1.2"/><path d="M8 3.4H13V7" fill="none" stroke="#f0f0f0" stroke-width="1.4"/><path d="M11 6L13 9L15 6Z" fill="#f0f0f0"/><circle cx="7.4" cy="12.6" r="3" fill="none" stroke="#8ec9f5" stroke-width="1.3"/><circle cx="12.6" cy="12.6" r="3" fill="none" stroke="#8ec9f5" stroke-width="1.3"/></svg>
<svg style="left:7.9px;top:505px;" width="16" height="16" viewBox="0 0 16 16"><path d="M7 2V14.6H0.8Z" fill="none" stroke="#d4d4d4" stroke-width="1.2"/><path d="M9.4 2V14.6H15.4Z" fill="none" stroke="#8ec9f5" stroke-width="1.3"/></svg>
<svg style="left:7.9px;top:527px;" width="16" height="16" viewBox="0 0 16 16"><path d="M1 12.4C1 6 5 1.4 9.4 1.4" fill="none" stroke="#8ec9f5" stroke-width="1.4"/><path d="M10.6 1.4H16M1 13V16" fill="none" stroke="#f0f0f0" stroke-width="1.3"/></svg>
<svg style="left:7.9px;top:549px;" width="16" height="16" viewBox="0 0 16 16"><path d="M13.4 8.6A6 6 0 1 1 8 2.8" fill="none" stroke="#f0f0f0" stroke-width="1.4"/><path d="M7.4 0L12.2 2.6L7.8 5.8Z" fill="#f0f0f0"/></svg>
<svg style="left:7.9px;top:571px;" width="16" height="16" viewBox="0 0 16 16"><rect x="1" y="1.6" width="13.4" height="13" fill="none" stroke="#ee1010" stroke-width="1.5"/><path d="M6.2 12.4V5H8.6C10.4 5 10.6 8.4 8.6 8.4H6.4" fill="none" stroke="#ee1010" stroke-width="1.3"/><rect x="13" y="0.4" width="2.6" height="2.6" fill="#20f020"/><rect x="0" y="13.2" width="2.6" height="2.6" fill="#20f020"/></svg>
<svg style="left:7.9px;top:593px;" width="16" height="16" viewBox="0 0 16 16"><rect x="1" y="1.6" width="13" height="13" fill="none" stroke="#ee1010" stroke-width="1.5"/><path d="M5.4 12.4V5H7.8C9.6 5 9.8 8.4 7.8 8.4H5.6" fill="none" stroke="#ee1010" stroke-width="1.3"/><circle cx="14.2" cy="8" r="2" fill="#20f020"/></svg>
<div style="left:32px;top:207px;width:24.5px;height:404.5px;background:#3b4453;box-sizing:border-box;border:1px solid #2a313d"></div>
<svg style="left:35.8px;top:210.2px;" width="14" height="4" viewBox="0 0 14 4"><rect x="0" y="0" width="1" height="1.1" fill="#dfe3ea"/><rect x="0" y="2.2" width="1" height="1.1" fill="#dfe3ea"/><rect x="2" y="0" width="1" height="1.1" fill="#dfe3ea"/><rect x="2" y="2.2" width="1" height="1.1" fill="#dfe3ea"/><rect x="4" y="0" width="1" height="1.1" fill="#dfe3ea"/><rect x="4" y="2.2" width="1" height="1.1" fill="#dfe3ea"/><rect x="6" y="0" width="1" height="1.1" fill="#dfe3ea"/><rect x="6" y="2.2" width="1" height="1.1" fill="#dfe3ea"/><rect x="8" y="0" width="1" height="1.1" fill="#dfe3ea"/><rect x="8" y="2.2" width="1" height="1.1" fill="#dfe3ea"/><rect x="10" y="0" width="1" height="1.1" fill="#dfe3ea"/><rect x="10" y="2.2" width="1" height="1.1" fill="#dfe3ea"/><rect x="12" y="0" width="1" height="1.1" fill="#dfe3ea"/><rect x="12" y="2.2" width="1" height="1.1" fill="#dfe3ea"/></svg>
<svg style="left:35.8px;top:219px;" width="16" height="16" viewBox="0 0 16 16"><path d="M1 12H8.6" stroke="#f0f0f0" stroke-width="1.3" stroke-dasharray="3.4 1.4"/><path d="M9 12C13.6 12 15 9.6 15 7.6C15 5.6 13.6 4 11.6 3.8" fill="none" stroke="#f0f0f0" stroke-width="1.3"/><rect x="0" y="11" width="2.2" height="2.2" fill="#8ec9f5"/><rect x="8.6" y="11" width="2.2" height="2.2" fill="#8ec9f5"/><rect x="9" y="2.6" width="2.2" height="2.2" fill="#8ec9f5"/></svg>
<svg style="left:35.8px;top:241px;" width="16" height="16" viewBox="0 0 16 16"><circle cx="8" cy="8" r="7.2" fill="none" stroke="#d4d4d4" stroke-width="1.2"/><path d="M8 5.4V10.6M5.4 8H10.6" fill="none" stroke="#8ec9f5" stroke-width="1.2"/></svg>
<svg style="left:35.8px;top:263px;" width="16" height="16" viewBox="0 0 16 16"><path d="M8 1.6L14.6 6.6L12 14H4L1.4 6.6Z" fill="none" stroke="#d4d4d4" stroke-width="1.2"/><rect x="7.2" y="7.4" width="1.8" height="1.8" fill="#8ec9f5"/><rect x="11" y="13" width="2.2" height="2.2" fill="#8ec9f5"/></svg>
<svg style="left:35.8px;top:285px;" width="16" height="16" viewBox="0 0 16 16"><path d="M0.6 3.4L3.4 1H11.6V11L8.8 13.4H0.6Z" fill="#8ec9f5"/><path d="M0.6 3.4H8.8V13.4M8.8 3.4L11.6 1" fill="none" stroke="#bfe0fa" stroke-width="0.8"/><path d="M0.6 13.8H8.8L11.6 11.6V13.6L8.8 16H0.6Z" fill="#e6e6e6"/><path d="M14.6 3V14" stroke="#fff" stroke-width="1.4"/><path d="M12.6 4.2L14.6 0.6L16.6 4.2Z" fill="#fff"/></svg>
<svg style="left:35.8px;top:307px;" width="16" height="16" viewBox="0 0 16 16"><path d="M0.6 6.6C4 4.6 10 4.6 13.4 6.6L15.6 8.4V12.6L13 15C9 12.6 5 12.6 1.6 15L0.6 13.4Z" fill="#8ec9f5"/><path d="M13.4 7.8L15.6 8.4V12.6L13.4 14.6Z" fill="#e6e6e6"/><path d="M1 4.6C4 1.6 12 1.6 15 4.6" fill="none" stroke="#fff" stroke-width="1.2"/></svg>
<svg style="left:35.8px;top:329px;" width="16" height="16" viewBox="0 0 16 16"><path d="M1 4.4L4.6 1H10L8.6 3.8H15.4V10.6L13 12.6H1Z" fill="#8ec9f5"/><rect x="5.6" y="8.4" width="7" height="6.8" fill="#d8d8d8" stroke="#f4f4f4" stroke-width="0.8"/></svg>
<svg style="left:35.8px;top:351px;" width="16" height="16" viewBox="0 0 16 16"><path d="M0.6 0.8H15.4V9.6L12 13H4L0.6 9.6Z" fill="#8ec9f5"/><path d="M0.6 0.8L6 8M15.4 0.8L10 8" stroke="#c8e4fa" stroke-width="0.9"/><circle cx="8" cy="11.6" r="4" fill="#d4d4d4"/></svg>
<svg style="left:35.8px;top:373px;" width="16" height="16" viewBox="0 0 16 16"><path d="M0.8 7.4L10 4.8H15.4L15.2 8.4L6.6 12H0.8Z" fill="#d8d8d8"/><path d="M0.8 7.4H6.8L15.4 4.8M6.8 7.4V12" stroke="#b4b4b4" stroke-width="0.8" fill="none"/></svg>
<svg style="left:35.8px;top:395px;" width="16" height="16" viewBox="0 0 16 16"><path d="M0.6 8L3.6 5.4H9V12L6 15.2H0.6Z" fill="#8ec9f5"/><path d="M5.6 2.6L8.4 0.4H15.4V7.4L12.6 10H5.6Z" fill="#d8d8d8"/><path d="M5.6 2.6H12.6V10M12.6 2.6L15.4 0.4" stroke="#f2f2f2" stroke-width="0.8" fill="none"/></svg>
<svg style="left:35.8px;top:417px;" width="16" height="16" viewBox="0 0 16 16"><path d="M0.6 8.4L3.6 5.4H8L11 2H15.6V8.4L12 12.4H8L5.6 15.4H0.6Z" fill="#8ec9f5"/><path d="M0.6 8.4H5.6V15.4M5.6 8.4L8.4 5.6M8 5.4H12V12.2M12 5.4L15.6 2" stroke="#c4e2fa" stroke-width="0.8" fill="none"/></svg>
<svg style="left:35.8px;top:439px;" width="16" height="16" viewBox="0 0 16 16"><path d="M0.8 9.4L3.6 7H8.4V13L5.6 15.4H0.8Z" fill="#d8d8d8"/><path d="M6.6 3.4L9.4 1H15.4V7.6L12.4 10H6.6Z" fill="#d8d8d8"/><path d="M6.6 3.4H12.4V10M12.4 3.4L15.4 1M0.8 9.4H5.6V15.4" stroke="#f4f4f4" stroke-width="0.8" fill="none"/><rect x="5.4" y="6.4" width="4" height="4" fill="#8ec9f5" stroke="#e8f4ff" stroke-width="0.7"/></svg>
<svg style="left:35.8px;top:461px;" width="16" height="16" viewBox="0 0 16 16"><path d="M2.4 0.6L8.4 10.4M0.6 4.4L11 9" fill="none" stroke="#5a8ee8" stroke-width="1.4"/><circle cx="13.6" cy="8.4" r="1.9" fill="none" stroke="#5a8ee8" stroke-width="1.2"/><circle cx="8" cy="13.6" r="1.9" fill="none" stroke="#5a8ee8" stroke-width="1.2"/></svg>
<svg style="left:35.8px;top:483px;" width="16" height="16" viewBox="0 0 16 16"><circle cx="5.8" cy="11" r="4.2" fill="#ff1010"/><rect x="4.6" y="5.4" width="2.6" height="2" fill="#c01010"/><path d="M6 5.4C6.6 3 8.6 2.6 10.4 3.4" fill="none" stroke="#a0a0a0" stroke-width="1.1"/><circle cx="11.4" cy="3" r="1.7" fill="#f08a30"/><path d="M11.4 0V1M14.4 3H13.6M13.6 0.8L12.9 1.5" stroke="#f0a050" stroke-width="0.8"/></svg>
<svg style="left:35.8px;top:505px;" width="16" height="16" viewBox="0 0 16 16"><rect x="0.8" y="4.6" width="10.6" height="10.6" fill="#fff" stroke="#000" stroke-width="1.2"/><rect x="6.6" y="0.8" width="8.6" height="8" fill="none" stroke="#e02010" stroke-width="1.3" stroke-dasharray="2.6 1.4"/></svg>
<svg style="left:35.8px;top:527px;" width="16" height="16" viewBox="0 0 16 16"><path d="M0.6 6H12" fill="none" stroke="#f0f0f0" stroke-width="1.2"/><path d="M9.4 3.4L13 6L9.4 8.6Z" fill="#f0f0f0"/><path d="M0.6 11H13" stroke="#8ec9f5" stroke-width="1.2" stroke-dasharray="2 1.2"/><path d="M0.6 11H4.6" stroke="#f0f0f0" stroke-width="1.2"/><path d="M14.6 1.6V14.4" fill="none" stroke="#f0f0f0" stroke-width="1.3"/></svg>
<svg style="left:35.8px;top:549px;" width="16" height="16" viewBox="0 0 16 16"><path d="M0.6 8.4H5.6" stroke="#a8a8a8" stroke-width="1.8"/><path d="M9 8.4H16" stroke="#3a8edc" stroke-width="1.4" stroke-dasharray="2 1.4"/><path d="M10.4 0.6L5 15.6" fill="none" stroke="#2aa0f0" stroke-width="1.5"/></svg>
<svg style="left:35.8px;top:571px;" width="16" height="16" viewBox="0 0 16 16"><path d="M2 8H11" fill="none" stroke="#f0f0f0" stroke-width="1.2"/><rect x="0.4" y="6.8" width="2.4" height="2.4" fill="#3b4453" stroke="#f0f0f0" stroke-width="0.9"/><rect x="11" y="5.8" width="4.4" height="4.4" fill="#3b4453" stroke="#f2b98c" stroke-width="1.2"/></svg>
<svg style="left:35.8px;top:593px;" width="16" height="16" viewBox="0 0 16 16"><rect x="0" y="1" width="16" height="14" fill="#000"/><rect x="0" y="1" width="16" height="1" fill="#aaa"/><rect x="0" y="13.6" width="16" height="1.4" fill="#ddd"/><rect x="0" y="5.6" width="3.4" height="8" fill="#8a8a8a"/><rect x="0.4" y="2.4" width="4.6" height="3" fill="#fff"/><rect x="6.4" y="2.4" width="4" height="3" fill="#fff"/><rect x="11.6" y="2.4" width="4" height="3" fill="#fff"/><rect x="1.6" y="3.4" width="2" height="1" fill="#666"/><rect x="7.4" y="3.4" width="2" height="0.8" fill="#666"/><rect x="12.6" y="3.4" width="2" height="0.8" fill="#666"/></svg>
<div style="left:60px;top:207px;width:24.5px;height:404.5px;background:#3b4453;box-sizing:border-box;border:1px solid #2a313d"></div>
<svg style="left:63.8px;top:210.2px;" width="14" height="4" viewBox="0 0 14 4"><rect x="0" y="0" width="1" height="1.1" fill="#dfe3ea"/><rect x="0" y="2.2" width="1" height="1.1" fill="#dfe3ea"/><rect x="2" y="0" width="1" height="1.1" fill="#dfe3ea"/><rect x="2" y="2.2" width="1" height="1.1" fill="#dfe3ea"/><rect x="4" y="0" width="1" height="1.1" fill="#dfe3ea"/><rect x="4" y="2.2" width="1" height="1.1" fill="#dfe3ea"/><rect x="6" y="0" width="1" height="1.1" fill="#dfe3ea"/><rect x="6" y="2.2" width="1" height="1.1" fill="#dfe3ea"/><rect x="8" y="0" width="1" height="1.1" fill="#dfe3ea"/><rect x="8" y="2.2" width="1" height="1.1" fill="#dfe3ea"/><rect x="10" y="0" width="1" height="1.1" fill="#dfe3ea"/><rect x="10" y="2.2" width="1" height="1.1" fill="#dfe3ea"/><rect x="12" y="0" width="1" height="1.1" fill="#dfe3ea"/><rect x="12" y="2.2" width="1" height="1.1" fill="#dfe3ea"/></svg>
<svg style="left:63.599999999999994px;top:219px;" width="16" height="16" viewBox="0 0 16 16"><path d="M3.5 1.5H14.5V13.5H3.5ZM9 1.5V13.5M3.5 7.5H14.5" fill="none" stroke="#1ea6e6" stroke-width="1.8"/><path d="M1 10V15H6" fill="none" stroke="#e03030" stroke-width="1.4"/></svg>
<svg style="left:63.599999999999994px;top:241px;" width="16" height="16" viewBox="0 0 16 16"><rect x="3.7" y="0.4" width="8.6" height="8.0" fill="#000"/><rect x="5.7" y="2.4" width="4.6" height="4.0" fill="#ff0000"/><path d="M8 9.2L12 13H9.6V16H6.4V13H4Z" fill="#000"/></svg>
<svg style="left:63.599999999999994px;top:263px;" width="16" height="16" viewBox="0 0 16 16"><path d="M7.4 8.4L3.6 4.4V7H0V9.8H3.6V12.4Z" fill="#000"/><rect x="7.6" y="4.2" width="8.6" height="8.0" fill="#000"/><rect x="9.6" y="6.2" width="4.6" height="4.0" fill="#ff0000"/></svg>
<svg style="left:63.599999999999994px;top:285px;" width="16" height="16" viewBox="0 0 16 16"><rect x="-0.2" y="4.2" width="8.6" height="8.0" fill="#000"/><rect x="1.8" y="6.2" width="4.6" height="4.0" fill="#ff0000"/><path d="M8.6 8.4L12.4 4.4V7H16V9.8H12.4V12.4Z" fill="#000"/></svg>
<svg style="left:63.599999999999994px;top:307px;" width="16" height="16" viewBox="0 0 16 16"><path d="M8 7.2L12 3.4H9.6V0H6.4V3.4H4Z" fill="#000"/><rect x="3.7" y="8" width="8.6" height="8.0" fill="#000"/><rect x="5.7" y="10" width="4.6" height="4.0" fill="#ff0000"/></svg>
<svg style="left:63.599999999999994px;top:329px;" width="16" height="16" viewBox="0 0 16 16"><path d="M4.4 3.4L7 1H15.4V9L12.6 11.6H4.4Z" fill="#fff" stroke="#000" stroke-width="1"/><rect x="4.4" y="3.4" width="8.2" height="8.2" fill="#0000ff" stroke="#000" stroke-width="0.8"/><rect x="0.8" y="11.4" width="4" height="4" fill="#ff0000" stroke="#000" stroke-width="0.9"/></svg>
<svg style="left:63.599999999999994px;top:351px;" width="16" height="16" viewBox="0 0 16 16"><path d="M3.6 5.4L8.6 2.4V10.4L3.6 13.4Z" fill="#0000ff" stroke="#000" stroke-width="1"/><path d="M3.6 5.4L1.2000000000000002 4.4V12.4L3.6 13.4Z" fill="#fff" stroke="#000" stroke-width="0.8"/><path d="M1.2000000000000002 4.4L6.2 1.4L8.6 2.4L3.6 5.4Z" fill="#fff" stroke="#000" stroke-width="0.8"/><rect x="10.6" y="10.6" width="4" height="4" fill="#ff0000" stroke="#000" stroke-width="0.9"/></svg>
<svg style="left:63.599999999999994px;top:373px;" width="16" height="16" viewBox="0 0 16 16"><rect x="0.8" y="0.8" width="4" height="4" fill="#ff0000" stroke="#000" stroke-width="0.9"/><path d="M8.8 6.4L13.8 3.4V11.4L8.8 14.4Z" fill="#0000ff" stroke="#000" stroke-width="1"/><path d="M8.8 6.4L6.4 5.4V13.4L8.8 14.4Z" fill="#fff" stroke="#000" stroke-width="0.8"/><path d="M6.4 5.4L11.4 2.4L13.8 3.4L8.8 6.4Z" fill="#fff" stroke="#000" stroke-width="0.8"/></svg>
<svg style="left:63.599999999999994px;top:395px;" width="16" height="16" viewBox="0 0 16 16"><g transform="translate(0,1)"><path d="M3.4 6.4L8.4 3.4V11.4L3.4 14.4Z" fill="#0000ff" stroke="#000" stroke-width="1"/><path d="M3.4 6.4L1.0 5.4V13.4L3.4 14.4Z" fill="#fff" stroke="#000" stroke-width="0.8"/><path d="M1.0 5.4L6.0 2.4L8.4 3.4L3.4 6.4Z" fill="#fff" stroke="#000" stroke-width="0.8"/></g><rect x="11" y="0.8" width="4" height="4" fill="#ff0000" stroke="#000" stroke-width="0.9"/></svg>
<svg style="left:63.599999999999994px;top:417px;" width="16" height="16" viewBox="0 0 16 16"><rect x="0.8" y="0.8" width="12.6" height="12.6" fill="none" stroke="#d4d4d4" stroke-width="1.2"/><rect x="8" y="8" width="8" height="8" fill="#3b4453"/><circle cx="11.2" cy="11" r="2.6" fill="none" stroke="#d4d4d4" stroke-width="1.1"/><path d="M13.2 13L15.8 15.6" stroke="#e8c8a0" stroke-width="1.3"/></svg>
<svg style="left:63.599999999999994px;top:439px;" width="16" height="16" viewBox="0 0 16 16"><path d="M1 0.6V15.6M15 0.6V15.6M1 3H15" fill="none" stroke="#d4d4d4" stroke-width="1.2"/><path d="M1.4 3L3.4 1.8V4.2ZM14.6 3L12.6 1.8V4.2Z" fill="#d4d4d4"/><path d="M9.8 5.6L6 10H8.2L6.6 14.6L11 9.4H8.6Z" fill="#f6c860"/></svg>
<svg style="left:63.599999999999994px;top:461px;" width="16" height="16" viewBox="0 0 16 16"><path d="M1 11.6V4.6H15V11.6" fill="none" stroke="#1e4a26" stroke-width="1.8"/><rect x="4.6" y="2" width="6.8" height="2.2" fill="#1e4a26"/></svg>
<svg style="left:63.599999999999994px;top:483px;" width="16" height="16" viewBox="0 0 16 16"><ellipse cx="8" cy="8" rx="3.6" ry="7.2" fill="none" stroke="#f0f0f0" stroke-width="1.1"/><ellipse cx="8" cy="8" rx="7.2" ry="3.6" fill="none" stroke="#f0f0f0" stroke-width="1.1" stroke-dasharray="9 3"/><path d="M8 5.8V10.2M5.8 8H10.2" fill="none" stroke="#8ec9f5" stroke-width="1.1"/><path d="M12 2.4L14 3.6L12.4 5" fill="none" stroke="#8ec9f5" stroke-width="1.1"/></svg>
<svg style="left:63.599999999999994px;top:505px;" width="16" height="16" viewBox="0 0 16 16"><ellipse cx="8" cy="14.4" rx="6.4" ry="1" fill="#4e5664"/><circle cx="8" cy="7" r="6.2" fill="#dcdcdc"/><circle cx="6.4" cy="5" r="3.2" fill="#f4f4f4"/></svg>
<svg style="left:63.599999999999994px;top:527px;" width="16" height="16" viewBox="0 0 16 16"><path d="M1 5L5 1H15V11L11 15H1ZM1 5H11V15M11 5L15 1" fill="none" stroke="#6cbaf4" stroke-width="1.6"/><path d="M5 1V11H15M5 11L1 15" fill="none" stroke="#6cbaf4" stroke-width="0.9"/><path d="M6 10L3 13M6 10V7.4M6 10H9" stroke="#f0f0f0" stroke-width="0.9"/></svg>
<svg style="left:63.599999999999994px;top:549px;" width="16" height="16" viewBox="0 0 16 16"><path d="M0.4 5H3.6L5.6 2.4H9L10.4 5H15.6V14H0.4Z" fill="#000"/><circle cx="8" cy="9" r="3.2" fill="#fff"/><circle cx="8" cy="9" r="2.2" fill="#0a0a8c"/><path d="M4 4L6.6 1.8" stroke="#30c0c0" stroke-width="0.9"/></svg>
<svg style="left:63.599999999999994px;top:571px;" width="16" height="16" viewBox="0 0 16 16"><path d="M0.6 8L8 5L15.4 8V12.4L8 15.6L0.6 12.4Z" fill="#d8d8d8"/><path d="M0.6 8L8 11L15.4 8L8 5Z" fill="#f2f2f2"/><path d="M8 11V15.6L15.4 12.4V8Z" fill="#bcbcbc"/><path d="M4.6 3V8C4.6 9.8 11.4 9.8 11.4 8V3Z" fill="#6cb6ee"/><ellipse cx="8" cy="3" rx="3.4" ry="1.8" fill="#8ec9f5"/></svg>
<svg style="left:63.599999999999994px;top:593px;" width="16" height="16" viewBox="0 0 16 16"><rect x="0.8" y="0.8" width="13.4" height="13.4" fill="none" stroke="#d4d4d4" stroke-width="1.2"/><circle cx="6" cy="6" r="3.6" fill="#8a919c" stroke="#d4d4d4" stroke-width="1"/><path d="M6.6 10V6.6H12.6V10" fill="none" stroke="#5ab4f4" stroke-width="1.4"/><path d="M7 13H13.6C16.4 13 16.4 9.6 13.6 9.6" fill="none" stroke="#5ab4f4" stroke-width="1.5"/><path d="M9.6 10.4L6.6 13L9.6 15.6Z" fill="#5ab4f4"/></svg>
<div style="left:88px;top:207px;width:24.5px;height:404.5px;background:#3b4453;box-sizing:border-box;border:1px solid #2a313d"></div>
<svg style="left:91.8px;top:210.2px;" width="14" height="4" viewBox="0 0 14 4"><rect x="0" y="0" width="1" height="1.1" fill="#dfe3ea"/><rect x="0" y="2.2" width="1" height="1.1" fill="#dfe3ea"/><rect x="2" y="0" width="1" height="1.1" fill="#dfe3ea"/><rect x="2" y="2.2" width="1" height="1.1" fill="#dfe3ea"/><rect x="4" y="0" width="1" height="1.1" fill="#dfe3ea"/><rect x="4" y="2.2" width="1" height="1.1" fill="#dfe3ea"/><rect x="6" y="0" width="1" height="1.1" fill="#dfe3ea"/><rect x="6" y="2.2" width="1" height="1.1" fill="#dfe3ea"/><rect x="8" y="0" width="1" height="1.1" fill="#dfe3ea"/><rect x="8" y="2.2" width="1" height="1.1" fill="#dfe3ea"/><rect x="10" y="0" width="1" height="1.1" fill="#dfe3ea"/><rect x="10" y="2.2" width="1" height="1.1" fill="#dfe3ea"/><rect x="12" y="0" width="1" height="1.1" fill="#dfe3ea"/><rect x="12" y="2.2" width="1" height="1.1" fill="#dfe3ea"/></svg>
<svg style="left:92.1px;top:219px;" width="16" height="16" viewBox="0 0 16 16"><rect x="1.6" y="0.4" width="1.1" height="1.1" fill="#1ea6e6"/><rect x="1.6" y="3.2" width="1.1" height="1.1" fill="#1ea6e6"/><rect x="4.4" y="0.4" width="1.1" height="1.1" fill="#1ea6e6"/><rect x="4.4" y="3.2" width="1.1" height="1.1" fill="#1ea6e6"/><rect x="7.2" y="0.4" width="1.1" height="1.1" fill="#1ea6e6"/><rect x="7.2" y="3.2" width="1.1" height="1.1" fill="#1ea6e6"/><rect x="10" y="0.4" width="1.1" height="1.1" fill="#1ea6e6"/><rect x="10" y="3.2" width="1.1" height="1.1" fill="#1ea6e6"/><rect x="12.8" y="0.4" width="1.1" height="1.1" fill="#1ea6e6"/><rect x="12.8" y="3.2" width="1.1" height="1.1" fill="#1ea6e6"/><text x="8" y="15.4" text-anchor="middle" font-family="Liberation Sans,sans-serif" font-weight="bold" font-size="10.5" fill="#1ea6e6" stroke="#1ea6e6" stroke-width="0.5" textLength="16" lengthAdjust="spacingAndGlyphs">100</text></svg>
<svg style="left:92.1px;top:241px;" width="16" height="16" viewBox="0 0 16 16"><path d="M1.6 14H14.6" fill="none" stroke="#1ea6e6" stroke-width="1.2"/><path d="M6 1.6L2 14M5.4 4L11 13.4" stroke="#1ea6e6" stroke-width="1.1" stroke-dasharray="2 1"/><rect x="5" y="0.4" width="2" height="2" fill="#e01030"/><rect x="13.6" y="13" width="2" height="2" fill="#e01030"/></svg>
<svg style="left:92.1px;top:263px;" width="16" height="16" viewBox="0 0 16 16"><path d="M3 13L13 3" fill="none" stroke="#d4d4d4" stroke-width="1.2"/><rect x="0.8" y="11.6" width="3.6" height="3.6" fill="#3b4453" stroke="#f2b98c" stroke-width="1.1"/><rect x="11.6" y="0.8" width="3.6" height="3.6" fill="#3b4453" stroke="#f2b98c" stroke-width="1.1"/></svg>
<svg style="left:92.1px;top:285px;" width="16" height="16" viewBox="0 0 16 16"><path d="M0.6 15.4L15.4 0.6" fill="none" stroke="#d4d4d4" stroke-width="1.2"/><rect x="6.2" y="6.2" width="3.6" height="3.6" fill="#3b4453" stroke="#f2b98c" stroke-width="1.1"/></svg>
<svg style="left:92.1px;top:307px;" width="16" height="16" viewBox="0 0 16 16"><path d="M0.8 0.8L15.2 15.2M15.2 0.8L0.8 15.2" fill="none" stroke="#d4d4d4" stroke-width="1.2"/><rect x="6.2" y="6.2" width="3.6" height="3.6" fill="#3b4453" stroke="#f2b98c" stroke-width="1.1"/></svg>
<svg style="left:92.1px;top:329px;" width="16" height="16" viewBox="0 0 16 16"><circle cx="8" cy="8" r="7.2" fill="none" stroke="#d4d4d4" stroke-width="1.2"/><rect x="6.5" y="6.5" width="3" height="3" fill="#3b4453" stroke="#f2b98c" stroke-width="1.1"/></svg>
<svg style="left:92.1px;top:351px;" width="16" height="16" viewBox="0 0 16 16"><path d="M8 0.4V12M0.6 12H15.4" fill="none" stroke="#d4d4d4" stroke-width="1.2"/><rect x="6.2" y="10.2" width="3.6" height="3.6" fill="#3b4453" stroke="#f2b98c" stroke-width="1.1"/></svg>
<svg style="left:92.1px;top:373px;" width="16" height="16" viewBox="0 0 16 16"><circle cx="8" cy="8" r="5.6" fill="none" stroke="#d4d4d4" stroke-width="1.1"/><rect x="6.4" y="0.6000000000000001" width="3.2" height="3.2" fill="#3b4453" stroke="#f2b98c" stroke-width="1.1"/><rect x="6.4" y="12.200000000000001" width="3.2" height="3.2" fill="#3b4453" stroke="#f2b98c" stroke-width="1.1"/><rect x="0.6000000000000001" y="6.4" width="3.2" height="3.2" fill="#3b4453" stroke="#f2b98c" stroke-width="1.1"/><rect x="12.200000000000001" y="6.4" width="3.2" height="3.2" fill="#3b4453" stroke="#f2b98c" stroke-width="1.1"/></svg>
<svg style="left:92.1px;top:395px;" width="16" height="16" viewBox="0 0 16 16"><rect x="6.2" y="6.2" width="3.6" height="3.6" fill="#3b4453" stroke="#f2b98c" stroke-width="1.1"/></svg>
<svg style="left:92.1px;top:417px;" width="16" height="16" viewBox="0 0 16 16"><path d="M0.8 1.6V15M15.2 1.6V15" fill="none" stroke="#d4d4d4" stroke-width="1.3"/><path d="M2 6H14" fill="none" stroke="#5ab4f4" stroke-width="1.2"/><path d="M1.6 6L4.4 4.4V7.6ZM14.4 6L11.6 4.4V7.6Z" fill="#5ab4f4"/></svg>
<svg style="left:92.1px;top:439px;" width="16" height="16" viewBox="0 0 16 16"><path d="M2 1.4V6.4M14 1.4V6.4M2 4H14" fill="none" stroke="#d4d4d4" stroke-width="1.2"/><path d="M2.4 4L4.4 2.8V5.2ZM13.6 4L11.6 2.8V5.2Z" fill="#d4d4d4"/><rect x="1" y="8.4" width="14" height="5" fill="#f2c468"/><rect x="2.2" y="8.4" width="0.7" height="2.6" fill="#8a6a20"/><rect x="3.9" y="8.4" width="0.7" height="1.6" fill="#8a6a20"/><rect x="5.6" y="8.4" width="0.7" height="2.6" fill="#8a6a20"/><rect x="7.3" y="8.4" width="0.7" height="1.6" fill="#8a6a20"/><rect x="9" y="8.4" width="0.7" height="2.6" fill="#8a6a20"/><rect x="10.7" y="8.4" width="0.7" height="1.6" fill="#8a6a20"/><rect x="12.4" y="8.4" width="0.7" height="2.6" fill="#8a6a20"/><rect x="14.1" y="8.4" width="0.7" height="1.6" fill="#8a6a20"/></svg>
<svg style="left:92.1px;top:461px;" width="16" height="16" viewBox="0 0 16 16"><rect x="1.8" y="3.6" width="14" height="11" fill="#2a2a2a"/><rect x="0.8" y="2.4" width="13.6" height="10.6" fill="#fff" stroke="#ee1010" stroke-width="1.4"/></svg>
<svg style="left:92.1px;top:483px;" width="16" height="16" viewBox="0 0 16 16"><path d="M8.6 2L15 5.4V11.6L8.6 15.4L2.4 11.6V5.4Z" fill="#2a8cf0"/><path d="M8.6 8.6V15.4L15 11.6V5.4Z" fill="#3c50d8"/><path d="M8.6 2L15 5.4L8.6 8.6L2.4 5.4Z" fill="#34a4fa"/><rect x="0.4" y="3.4" width="2.6" height="2.6" fill="#e01020" stroke="#ff5050" stroke-width="0.6"/></svg>
<svg style="left:92.1px;top:505px;" width="16" height="16" viewBox="0 0 16 16"><rect x="0.4" y="0.8" width="15.2" height="14.4" fill="#000" stroke="#d8d8d8" stroke-width="0.8"/><path d="M7.6 0.8V15.2M0.4 8H15.6" stroke="#d8d8d8" stroke-width="1.2"/><rect x="0.4" y="13.6" width="15.2" height="1.6" fill="#d8d8d8"/><path d="M2 10.4V12.6H4.4" stroke="#d8d8d8" stroke-width="0.8" fill="none"/></svg>
<svg style="left:92.1px;top:527px;" width="16" height="16" viewBox="0 0 16 16"><path d="M3.6 3.4H10.6L15.4 7V15.6H3.6Z" fill="#e2e2e2"/><path d="M10.6 3.4V7H15.4Z" fill="#a8a8a8"/><rect x="3.6" y="9.6" width="11.8" height="4.6" fill="#8a8a8a"/><text x="9.5" y="13.6" text-anchor="middle" font-family="Liberation Sans,sans-serif" font-weight="bold" font-size="4.6" fill="#fff">WMF</text><path d="M0.4 3H5.4" fill="none" stroke="#3aa4f4" stroke-width="1.7"/><path d="M4.6 0.4L8 3L4.6 5.6Z" fill="#3aa4f4"/></svg>
<svg style="left:92.1px;top:549px;" width="16" height="16" viewBox="0 0 16 16"><rect x="2.4" y="0.8" width="12.6" height="3.6" fill="#111"/><rect x="3.4" y="1.6" width="8" height="1.2" fill="#ccc"/><rect x="2.4" y="4.4" width="12.6" height="1" fill="#f4f4f4"/><rect x="2.8" y="5.4" width="12" height="9.6" rx="1" fill="#f28c1e" stroke="#f6d8b0" stroke-width="0.7"/><circle cx="10" cy="10.4" r="3" fill="#f4f4f4"/><circle cx="10" cy="10.4" r="1.4" fill="#c8c8c8"/><path d="M3.4 13.4C5 13.6 6 12.6 6.4 11" stroke="#fff" stroke-width="1" fill="none"/></svg>
<svg style="left:92.1px;top:571px;" width="16" height="16" viewBox="0 0 16 16"><rect x="2" y="2.4" width="14" height="13.4" fill="#1a1a1a"/><rect x="0.8" y="0.8" width="14" height="13.6" fill="#f2f2f2" stroke="#c8c8c8" stroke-width="0.8"/><path d="M3 2.6H9.6L12.4 5.2V12.6H3Z" fill="#dbe8e4" stroke="#2c5ca8" stroke-width="1.1"/><path d="M9.6 2.6V5.2H12.4" fill="none" stroke="#2c5ca8" stroke-width="0.9"/><rect x="13.4" y="3" width="1.2" height="0.7" fill="#888"/><rect x="13.4" y="4.6" width="1.2" height="0.7" fill="#888"/><rect x="13.4" y="6.2" width="1.2" height="0.7" fill="#888"/><rect x="13.4" y="7.8" width="1.2" height="0.7" fill="#888"/><rect x="13.4" y="9.4" width="1.2" height="0.7" fill="#888"/><rect x="13.4" y="11" width="1.2" height="0.7" fill="#888"/></svg>
<svg style="left:92.1px;top:593px;" width="16" height="16" viewBox="0 0 16 16"><rect x="6" y="0.6" width="9" height="6.6" fill="#8a1c1c"/><rect x="7.8" y="2.4" width="7.6" height="5" fill="#f4f4f4"/><rect x="5.4" y="1.6" width="1.4" height="6" fill="#c8c8c8"/><rect x="1" y="8.6" width="9.6" height="6" fill="#0e6a1c"/><rect x="2.6" y="10" width="9" height="5.4" fill="#a0a0a0"/><rect x="0.4" y="9.4" width="1.6" height="5" fill="#c0c0c0"/><path d="M12.6 8.4L15 10V13" stroke="#d0d0d0" stroke-width="0.9" fill="none"/></svg>
<!-- canvas -->
<div style="left:117px;top:207px;width:1009px;height:493px;background:#000;"></div>
<svg style="left:277px;top:210px;" width="689" height="487" viewBox="0 0 689 487"><g shape-rendering="crispEdges" fill="none" stroke-width="1"><path d="M0 5.5H689M0 10.5H689M0 15.5H689M0 25.5H689M0 30.5H689M0 35.5H689M0 40.5H689M0 49.5H689M0 54.5H689M0 59.5H689M0 64.5H689M0 74.5H689M0 79.5H689M0 84.5H689M0 89.5H689M0 98.5H689M0 103.5H689M0 108.5H689M0 113.5H689M0 123.5H689M0 128.5H689M0 133.5H689M0 138.5H689M0 148.5H689M0 152.5H689M0 157.5H689M0 162.5H689M0 172.5H689M0 177.5H689M0 182.5H689M0 187.5H689M0 197.5H689M0 201.5H689M0 206.5H689M0 211.5H689M0 221.5H689M0 226.5H689M0 231.5H689M0 236.5H689M0 246.5H689M0 251.5H689M0 255.5H689M0 260.5H689M0 270.5H689M0 275.5H689M0 280.5H689M0 285.5H689M0 295.5H689M0 300.5H689M0 304.5H689M0 309.5H689M0 319.5H689M0 324.5H689M0 329.5H689M0 334.5H689M0 344.5H689M0 349.5H689M0 354.5H689M0 358.5H689M0 368.5H689M0 373.5H689M0 378.5H689M0 383.5H689M0 393.5H689M0 398.5H689M0 403.5H689M0 407.5H689M0 417.5H689M0 422.5H689M0 427.5H689M0 432.5H689M0 442.5H689M0 447.5H689M0 452.5H689M0 457.5H689M0 466.5H689M0 471.5H689M0 476.5H689M0 481.5H689" stroke="#431515"/><path d="M5.5 0V487M10.5 0V487M15.5 0V487M20.5 0V487M29.5 0V487M34.5 0V487M39.5 0V487M44.5 0V487M54.5 0V487M59.5 0V487M64.5 0V487M69.5 0V487M78.5 0V487M83.5 0V487M88.5 0V487M93.5 0V487M103.5 0V487M108.5 0V487M113.5 0V487M118.5 0V487M128.5 0V487M132.5 0V487M137.5 0V487M142.5 0V487M152.5 0V487M157.5 0V487M162.5 0V487M167.5 0V487M177.5 0V487M181.5 0V487M186.5 0V487M191.5 0V487M201.5 0V487M206.5 0V487M211.5 0V487M216.5 0V487M226.5 0V487M231.5 0V487M235.5 0V487M240.5 0V487M250.5 0V487M255.5 0V487M260.5 0V487M265.5 0V487M275.5 0V487M280.5 0V487M284.5 0V487M289.5 0V487M299.5 0V487M304.5 0V487M309.5 0V487M314.5 0V487M324.5 0V487M329.5 0V487M334.5 0V487M338.5 0V487M348.5 0V487M353.5 0V487M358.5 0V487M363.5 0V487M373.5 0V487M378.5 0V487M383.5 0V487M387.5 0V487M397.5 0V487M402.5 0V487M407.5 0V487M412.5 0V487M422.5 0V487M427.5 0V487M432.5 0V487M437.5 0V487M446.5 0V487M451.5 0V487M456.5 0V487M461.5 0V487M471.5 0V487M476.5 0V487M481.5 0V487M486.5 0V487M495.5 0V487M500.5 0V487M505.5 0V487M510.5 0V487M520.5 0V487M525.5 0V487M530.5 0V487M535.5 0V487M544.5 0V487M549.5 0V487M554.5 0V487M559.5 0V487M569.5 0V487M574.5 0V487M579.5 0V487M584.5 0V487M594.5 0V487M598.5 0V487M603.5 0V487M608.5 0V487M618.5 0V487M623.5 0V487M628.5 0V487M633.5 0V487M643.5 0V487M647.5 0V487M652.5 0V487M657.5 0V487M667.5 0V487M672.5 0V487M677.5 0V487M682.5 0V487" stroke="#1a521a"/><path d="M0 20.5H689M0 45.5H689M0 69.5H689M0 94.5H689M0 118.5H689M0 143.5H689M0 167.5H689M0 192.5H689M0 216.5H689M0 241.5H689M0 265.5H689M0 290.5H689M0 314.5H689M0 339.5H689M0 363.5H689M0 388.5H689M0 412.5H689M0 437.5H689M0 461.5H689" stroke="#844c52"/><path d="M0.5 0V487M25.5 0V487M49.5 0V487M74.5 0V487M98.5 0V487M123.5 0V487M147.5 0V487M172.5 0V487M196.5 0V487M221.5 0V487M245.5 0V487M270.5 0V487M294.5 0V487M319.5 0V487M343.5 0V487M368.5 0V487M392.5 0V487M417.5 0V487M441.5 0V487M466.5 0V487M490.5 0V487M515.5 0V487M540.5 0V487M564.5 0V487M589.5 0V487M613.5 0V487M638.5 0V487M662.5 0V487" stroke="#4e944e"/><path d="M0.5 0V487" stroke="#2a962a"/><path d="M688.5 0V487" stroke="#4e944e"/><path d="M0 0.5H689" stroke="#844c52"/><path d="M0 486.5H689" stroke="#9a2c2c"/></g></svg>
<!-- dropdown -->
<div style="left:633.3px;top:175.5px;width:304.2px;height:317px;background:#3b4453;box-sizing:border-box;border-right:1px solid #343b48;border-bottom:1px solid #343b48"></div>
<div style="left:594px;top:428px;width:50px;height:2px;background:#0f9b9b;"></div>
<svg style="left:633.3px;top:175.5px;" width="304.2" height="317" viewBox="0 0 304.2 317"><g transform="translate(-633.3,-175.5)"><path d="M661.2 184.2L647 210.6L675.8 205.4Z" fill="#2b5364" stroke="#a6a6a6" stroke-width="2" stroke-linejoin="miter" /><path d="M709.8 184.2L695.6 210.6L724.4 205.4Z" fill="#2b5364" stroke="#a6a6a6" stroke-width="2" stroke-linejoin="miter" /><path d="M709.8 184.6L711.4 208" fill="none" stroke="#a6a6a6" stroke-width="1.6"/><path d="M758.4 183.2L744.6 212.6L773.2 207.2Z" fill="#2b5364" stroke="#a6a6a6" stroke-width="2" stroke-linejoin="miter" /><path d="M752.3 196.4L760 209.6L766.4 196.6" fill="none" stroke="#a6a6a6" stroke-width="1.6"/><path d="M808 184.2L793.8 210.6L822.6 205.4Z" fill="#2b5364" stroke="#a6a6a6" stroke-width="2" stroke-linejoin="miter" /><path d="M808 184.6L809 208" fill="none" stroke="#a6a6a6" stroke-width="1.6"/><path d="M801 198L808.6 207.6L815.4 197" fill="none" stroke="#a6a6a6" stroke-width="1.3"/><path d="M854.6 183.8L842.2 211.6L854.2 209.4Z" fill="#2b5364" stroke="#a6a6a6" stroke-width="1.7" stroke-linejoin="miter" /><path d="M858.6 183.8L859.2 208.6L871.8 206.2Z" fill="#2b5364" stroke="#a6a6a6" stroke-width="1.7" stroke-linejoin="miter" /><ellipse cx="907.6" cy="198" rx="9.8" ry="14.8" fill="#2b5364" stroke="#a6a6a6" stroke-width="2"/><path d="M898.6 192C897.4 200 899.6 209 905 213" fill="none" stroke="#7c7c7c" stroke-width="1.4"/><path d="M661.9 257L650 273.4L662.2 287L674.6 270.6Z" fill="#2b5364" stroke="#a6a6a6" stroke-width="2" stroke-linejoin="miter" /><path d="M714.3 257.4L726.9 267L723.6 283.6L707.9 287L702.7 270.8Z" fill="#2b5364" stroke="#a6a6a6" stroke-width="2" stroke-linejoin="miter" /><path d="M756.4 258.8L769.7 257L776.8 269.8L771.4 283.6L758.3 287L750.7 273.4Z" fill="#2b5364" stroke="#a6a6a6" stroke-width="2" stroke-linejoin="miter" /><path d="M807 257.4L818.4 257.4L825.6 265L825.6 279.6L818.6 287L808.4 287L801.6 280L801.6 264.6Z" fill="#2b5364" stroke="#a6a6a6" stroke-width="2" stroke-linejoin="miter" /><path d="M861.6 256.8L850.6 271.8L861.8 287L872.6 271.8Z" fill="#2b5364" stroke="#a6a6a6" stroke-width="1.8" stroke-linejoin="miter" /><path d="M910 256.8L899.6 271.8L910.2 287L920.4 271.8Z" fill="#2b5364" stroke="#a6a6a6" stroke-width="1.6" stroke-linejoin="miter" /><path d="M910 257L910.2 287" fill="none" stroke="#a6a6a6" stroke-width="1.2"/><path d="M899.6 272.6L920.4 271" fill="none" stroke="#a6a6a6" stroke-width="1.2"/><ellipse cx="661.3" cy="345.7" rx="11.8" ry="14.6" fill="#2b5364" stroke="#a6a6a6" stroke-width="2.2"/><path d="M649.6999999999999 340C648.3 349 651.3 358 657.3 360.6" fill="none" stroke="#7c7c7c" stroke-width="1.3"/><ellipse cx="710.1" cy="345.7" rx="11.8" ry="14.6" fill="#2b5364" stroke="#a6a6a6" stroke-width="2.2"/><path d="M698.5 340C697.1 349 700.1 358 706.1 360.6" fill="none" stroke="#7c7c7c" stroke-width="1.3"/><path d="M698.6 348.4L721.8 343" fill="none" stroke="#a6a6a6" stroke-width="1.7"/><ellipse cx="759.5" cy="345.7" rx="11.8" ry="14.6" fill="#2b5364" stroke="#a6a6a6" stroke-width="2.2"/><path d="M747.9 340C746.5 349 749.5 358 755.5 360.6" fill="none" stroke="#7c7c7c" stroke-width="1.3"/><path d="M759.7 331.4L759.7 360" fill="none" stroke="#a6a6a6" stroke-width="1.7"/><ellipse cx="808.3" cy="345.7" rx="11.8" ry="14.6" fill="#2b5364" stroke="#a6a6a6" stroke-width="2.2"/><path d="M796.6999999999999 340C795.3 349 798.3 358 804.3 360.6" fill="none" stroke="#7c7c7c" stroke-width="1.3"/><path d="M808.5 331.4L808.5 360" fill="none" stroke="#a6a6a6" stroke-width="1.6"/><path d="M796.6 346.6L820 344.8" fill="none" stroke="#a6a6a6" stroke-width="1.6"/><ellipse cx="857.4" cy="345.7" rx="11.8" ry="14.6" fill="#2b5364" stroke="#a6a6a6" stroke-width="2.2"/><path d="M845.8 340C844.4 349 847.4 358 853.4 360.6" fill="none" stroke="#7c7c7c" stroke-width="1.3"/><path d="M857.4 331.6C859.0 340 862.4 344 868.8 345.7C862.4 347.4 859.0 351.4 857.4 359.8C855.8 351.4 852.4 347.4 846.0 345.7C852.4 344 855.8 340 857.4 331.6Z" fill="none" stroke="#a6a6a6" stroke-width="1.4"/><ellipse cx="906.3" cy="345.7" rx="11.8" ry="14.6" fill="#2b5364" stroke="#a6a6a6" stroke-width="2.2"/><path d="M894.6999999999999 340C893.3 349 896.3 358 902.3 360.6" fill="none" stroke="#7c7c7c" stroke-width="1.3"/><ellipse cx="906.3" cy="345.7" rx="4.8" ry="6" fill="none" stroke="#a6a6a6" stroke-width="1.5"/><path d="M906.3 331.4L906.3 339.6" fill="none" stroke="#a6a6a6" stroke-width="1.4"/><path d="M906.3 351.8L906.3 360" fill="none" stroke="#a6a6a6" stroke-width="1.4"/><path d="M894.9 345.7L901.5 345.7" fill="none" stroke="#a6a6a6" stroke-width="1.4"/><path d="M911.1 345.7L917.7 345.7" fill="none" stroke="#a6a6a6" stroke-width="1.4"/><path d="M661.5 405L667.5 414.6L667.1 432.6L656.3 435.4L655.5 415.6Z" fill="#2b5364" stroke="#a6a6a6" stroke-width="1.5" stroke-linejoin="miter" /><path d="M655.5 415.6L667.5 414.6" fill="none" stroke="#a6a6a6" stroke-width="1.1"/><path d="M710 405L715.5 414.6L715.1 432.6L705.3 435.4L704.5 415.6Z" fill="#2b5364" stroke="#a6a6a6" stroke-width="1.5" stroke-linejoin="miter" /><path d="M704.5 415.6L715.5 414.6" fill="none" stroke="#a6a6a6" stroke-width="1.1"/><path d="M759.5 405L765.2 414.6L764.8 432.6L754.6 435.4L753.8 415.6Z" fill="#2b5364" stroke="#a6a6a6" stroke-width="1.5" stroke-linejoin="miter" /><path d="M753.8 415.6L765.2 414.6" fill="none" stroke="#a6a6a6" stroke-width="1.1"/><path d="M759.5 415L759.7 434" fill="none" stroke="#a6a6a6" stroke-width="1.2"/><path d="M808.4 405L814.1 414.6L813.7 432.6L803.5 435.4L802.7 415.6Z" fill="#2b5364" stroke="#a6a6a6" stroke-width="1.5" stroke-linejoin="miter" /><path d="M802.7 415.6L814.1 414.6" fill="none" stroke="#a6a6a6" stroke-width="1.1"/><path d="M807 415L807.2 434.2" fill="none" stroke="#a6a6a6" stroke-width="1.1"/><path d="M810.2 415L810.4 433.8" fill="none" stroke="#a6a6a6" stroke-width="1.1"/><path d="M857.4 405L863.1 414.6L862.7 432.6L852.5 435.4L851.7 415.6Z" fill="#2b5364" stroke="#a6a6a6" stroke-width="1.5" stroke-linejoin="miter" /><path d="M851.7 415.6L863.1 414.6" fill="none" stroke="#a6a6a6" stroke-width="1.1"/><path d="M857.4 406L857.6 434.2" fill="none" stroke="#a6a6a6" stroke-width="1.1"/><path d="M851.8 422L863 421.2" fill="none" stroke="#a6a6a6" stroke-width="1.1"/><path d="M852 428.4L863 427.4" fill="none" stroke="#a6a6a6" stroke-width="1.1"/><path d="M906.4 405L912.1 414.6L911.7 432.6L901.5 435.4L900.7 415.6Z" fill="#2b5364" stroke="#a6a6a6" stroke-width="1.5" stroke-linejoin="miter" /><path d="M900.7 415.6L912.1 414.6" fill="none" stroke="#a6a6a6" stroke-width="1.1"/><path d="M906.4 406L906.6 434.2" fill="none" stroke="#a6a6a6" stroke-width="1.1"/><path d="M900.8 420L912 419.2" fill="none" stroke="#a6a6a6" stroke-width="1.1"/><path d="M900.9 425L912 424.2" fill="none" stroke="#a6a6a6" stroke-width="1.1"/><path d="M901 430L912 429.2" fill="none" stroke="#a6a6a6" stroke-width="1.1"/></g></svg>
<span style="left:632.4px;top:215.6px;width:56px;text-align:center;font-size:12px;line-height:16px;color:#e3e6ea;letter-spacing:-0.45px">삼각창1</span>
<span style="left:682px;top:215.6px;width:56px;text-align:center;font-size:12px;line-height:16px;color:#e3e6ea;letter-spacing:-0.45px">삼각창2</span>
<span style="left:730.9px;top:215.6px;width:56px;text-align:center;font-size:12px;line-height:16px;color:#e3e6ea;letter-spacing:-0.45px">삼각창3</span>
<span style="left:780.2px;top:215.6px;width:56px;text-align:center;font-size:12px;line-height:16px;color:#e3e6ea;letter-spacing:-0.45px">삼각창4</span>
<span style="left:829.1px;top:215.6px;width:56px;text-align:center;font-size:12px;line-height:16px;color:#e3e6ea;letter-spacing:-0.45px">삼각창5</span>
<span style="left:880.2px;top:215.6px;width:56px;text-align:center;font-size:12px;line-height:16px;color:#e3e6ea;letter-spacing:-0.45px">타원형창</span>
<span style="left:634.2px;top:290px;width:56px;text-align:center;font-size:12px;line-height:16px;color:#e3e6ea;letter-spacing:-0.45px">정사각창</span>
<span style="left:686.2px;top:290px;width:56px;text-align:center;font-size:12px;line-height:16px;color:#e3e6ea;letter-spacing:-0.45px">5각형창</span>
<span style="left:735px;top:290px;width:56px;text-align:center;font-size:12px;line-height:16px;color:#e3e6ea;letter-spacing:-0.45px">6각형창</span>
<span style="left:784.4px;top:290px;width:56px;text-align:center;font-size:12px;line-height:16px;color:#e3e6ea;letter-spacing:-0.45px">8각형창</span>
<span style="left:833.7px;top:290px;width:56px;text-align:center;font-size:12px;line-height:16px;color:#e3e6ea;letter-spacing:-0.45px">마름모1</span>
<span style="left:882.5px;top:290px;width:56px;text-align:center;font-size:12px;line-height:16px;color:#e3e6ea;letter-spacing:-0.45px">마름모2</span>
<span style="left:632.4px;top:364px;width:56px;text-align:center;font-size:12px;line-height:16px;color:#e3e6ea;letter-spacing:-0.45px">원형창1</span>
<span style="left:682px;top:364px;width:56px;text-align:center;font-size:12px;line-height:16px;color:#e3e6ea;letter-spacing:-0.45px">원형창2</span>
<span style="left:730.9px;top:364px;width:56px;text-align:center;font-size:12px;line-height:16px;color:#e3e6ea;letter-spacing:-0.45px">원형창3</span>
<span style="left:780.2px;top:364px;width:56px;text-align:center;font-size:12px;line-height:16px;color:#e3e6ea;letter-spacing:-0.45px">원형창4</span>
<span style="left:829.1px;top:364px;width:56px;text-align:center;font-size:12px;line-height:16px;color:#e3e6ea;letter-spacing:-0.45px">원형창5</span>
<span style="left:877.9px;top:364px;width:56px;text-align:center;font-size:12px;line-height:16px;color:#e3e6ea;letter-spacing:-0.45px">원형창6</span>
<span style="left:632.4px;top:438.4px;width:56px;text-align:center;font-size:12px;line-height:16px;color:#e3e6ea;letter-spacing:-0.45px">오각창1</span>
<span style="left:681.7px;top:438.4px;width:56px;text-align:center;font-size:12px;line-height:16px;color:#e3e6ea;letter-spacing:-0.45px">오각창2</span>
<span style="left:730.6px;top:438.4px;width:56px;text-align:center;font-size:12px;line-height:16px;color:#e3e6ea;letter-spacing:-0.45px">오각창3</span>
<span style="left:780px;top:438.4px;width:56px;text-align:center;font-size:12px;line-height:16px;color:#e3e6ea;letter-spacing:-0.45px">오각창4</span>
<span style="left:828.8px;top:438.4px;width:56px;text-align:center;font-size:12px;line-height:16px;color:#e3e6ea;letter-spacing:-0.45px">오각창5</span>
<span style="left:877.6px;top:438.4px;width:56px;text-align:center;font-size:12px;line-height:16px;color:#e3e6ea;letter-spacing:-0.45px">오각창6</span>
<span style="left:747px;top:474px;width:80px;text-align:center;font-size:12px;line-height:16px;color:#e3e6ea;letter-spacing:-0.45px;word-spacing:2px">다각형 창</span>
<div style="left:635px;top:474px;width:16.5px;height:18px;background:#4a5568;box-sizing:border-box;border:1px solid #84c0f2"></div>
<svg style="left:637.5px;top:477px;" width="12" height="12" viewBox="0 0 12 12"><circle cx="4.8" cy="6.6" r="4.2" fill="#d8d8d8"/><circle cx="7.8" cy="4" r="3.2" fill="#e2e2e2" stroke="#4a5568" stroke-width="0.7"/></svg>
<!-- dialog -->
<span style="left:120.6px;top:212.5px;font-size:12px;line-height:16px;color:#f6f6f6;letter-spacing:0.14px;word-spacing:1px">[−][평면도][2D 와이어프레임]</span>
<svg style="left:1017.9000000000001px;top:214.10000000000002px;" width="100" height="100" viewBox="0 0 100 100"><circle cx="50" cy="50" r="36.2" fill="none" stroke="#3b3b3b" stroke-width="9.4"/><rect x="32" y="32" width="36" height="36" fill="#d2d2d2" stroke="#8a8a8a" stroke-width="0.8"/><rect x="39" y="39" width="22" height="22" fill="#b2bac8"/><path d="M46 22.8H54L50 27Z" fill="#e6e6e6"/><path d="M46 77.2H54L50 73Z" fill="#e6e6e6"/><path d="M22.8 46V54L27 50Z" fill="#e6e6e6"/><path d="M77.2 46V54L73 50Z" fill="#e6e6e6"/></svg>
<span style="left:1052.9px;top:259.6px;width:30px;text-align:center;font-size:7.5px;line-height:10px;color:#222;letter-spacing:-0.4px">평면도</span>
<span style="left:1059.9px;top:218px;width:16px;text-align:center;font-size:12px;line-height:16px;color:#b6b6b6;">북</span>
<span style="left:1059.9px;top:295.4px;width:16px;text-align:center;font-size:12px;line-height:16px;color:#b6b6b6;">남</span>
<span style="left:1020.7px;top:256px;width:16px;text-align:center;font-size:12px;line-height:16px;color:#b6b6b6;">서</span>
<span style="left:1098.5px;top:256px;width:16px;text-align:center;font-size:12px;line-height:16px;color:#b6b6b6;">동</span>
<svg style="left:1018.5px;top:212.5px;" width="12" height="11" viewBox="0 0 12 11"><path d="M6 0L12 5.6H10.4V11H7.4V7H4.6V11H1.6V5.6H0Z" fill="#6e6e6e"/></svg>
<svg style="left:1094px;top:210px;" width="32" height="30" viewBox="0 0 32 30"><path d="M1.4 5.4L7.2 1.2L6.8 3.8C10.6 3.4 14 4.6 16.8 6.6L15 9.6C12.6 8 10 7.4 6.6 7.6L6.2 10.2Z" fill="#8fbfe8"/><path d="M19.4 11.6L22.4 9.8C24.8 13.4 25.8 17 25.6 21L28.4 20.8L24.4 26.6L19.6 21.4L22.4 21.2C22.6 17.6 21.6 14.6 19.4 11.6Z" fill="#5a5a5a"/></svg>
<svg style="left:1110px;top:304.6px;" width="8" height="6" viewBox="0 0 8 6"><path d="M0 0H8V1H0ZM0 2H8L4 6Z" fill="#7a7a7a"/></svg>
<div style="left:1044.5px;top:324.6px;width:47px;height:17px;background:#b7b7c9;border-radius:4px;box-sizing:border-box;border:1px solid #8e8ea4"></div>
<span style="left:1049px;top:325px;font-size:11px;line-height:16px;color:#4a4a55;letter-spacing:-0.2px">WCS</span>
<svg style="left:1077.5px;top:330px;" width="9" height="6" viewBox="0 0 9 6"><path d="M0.6 0.6H8.4L4.5 5.4Z" fill="#c8c8d8" stroke="#f0f0f6" stroke-width="0.8"/></svg>
<div style="left:220px;top:396.7px;width:369.5px;height:292.3px;background:#f0f0f0;border-radius:7px;box-shadow:0 0 0 1px rgba(120,120,120,0.55)"></div>
<span style="left:229px;top:402.5px;font-size:12px;line-height:16px;color:#8c8c8c;word-spacing:1.2px">오각형 창</span>
<svg style="left:569px;top:405px;" width="11" height="11" viewBox="0 0 11 11"><path d="M0.6 0.6L10.4 10.4M10.4 0.6L0.6 10.4" stroke="#7c7c7c" stroke-width="1"/></svg>
<svg style="left:228px;top:430px;" width="136" height="227.5" viewBox="0 0 136 227.5"><rect width="136" height="227.5" fill="#000"/><path d="M22.7 95L22.7 203" fill="none" stroke="#18e018" stroke-width="1"/><path d="M17 91L36 102.6" fill="none" stroke="#18e018" stroke-width="1"/><path d="M17 199L41 213.6" fill="none" stroke="#18e018" stroke-width="1"/><path d="M73.8 41.5L73.8 87.5" fill="none" stroke="#18e018" stroke-width="1"/><path d="M53.3 219.6L120 182.6" fill="none" stroke="#18e018" stroke-width="1"/><path d="M42 214L58.6 223.4" fill="none" stroke="#18e018" stroke-width="1"/><path d="M106 175.6L126 186.4" fill="none" stroke="#18e018" stroke-width="1"/><path d="M21.6 218.4L39.4 210.2" fill="none" stroke="#18e018" stroke-width="1"/><path d="M20 216L30 222" fill="none" stroke="#18e018" stroke-width="1"/><path d="M105.8 173.4L119.4 165.6" fill="none" stroke="#18e018" stroke-width="1"/><path d="M104 170L118 162" fill="none" stroke="#18e018" stroke-width="1"/><path d="M35.8 103L35.8 210L41.4 213.4L107.3 176L107.3 67.5L69 38.3L35.8 103L41.4 105.8L41.4 213.4" fill="none" stroke="#fff" stroke-width="1"/><path d="M46 103.4L46 209.6L104.2 176.4" fill="none" stroke="#fff" stroke-width="1"/><path d="M41.4 105.8L73.8 41.2L104 69L104 173.4L46 206" fill="none" stroke="#fff" stroke-width="1"/><path d="M69 38.3L73.8 41.2" fill="none" stroke="#fff" stroke-width="1"/><path d="M41.4 105.8L107.3 67.5" fill="none" stroke="#fff" stroke-width="1"/><path d="M46 100.4L104 68.6" fill="none" stroke="#fff" stroke-width="1"/><path d="M46 96.4L76 44" fill="none" stroke="#fff" stroke-width="1"/><path d="M50 95L100 67" fill="none" stroke="#fff" stroke-width="1"/><path d="M107.3 67.5L104 69" fill="none" stroke="#fff" stroke-width="1"/><path d="M48.6 97.6L100.6 68.2" fill="none" stroke="#20e0e8" stroke-width="1"/><path d="M102.6 70L102.6 172" fill="none" stroke="#20e0e8" stroke-width="1"/><path d="M48 205.4L102.6 172.4" fill="none" stroke="#20e0e8" stroke-width="1"/><path d="M84 52L100.6 67" fill="none" stroke="#20e0e8" stroke-width="1"/><text x="70" y="71.4" font-family="Liberation Sans,sans-serif" font-weight="bold" font-size="11.6" fill="#fff">B</text><text x="18.4" y="161.6" font-family="Liberation Sans,sans-serif" font-weight="bold" font-size="11.6" fill="#fff">C</text><text x="110.6" y="166" font-family="Liberation Sans,sans-serif" font-weight="bold" font-size="11.6" fill="#fff">D</text><text x="85" y="205.4" font-family="Liberation Sans,sans-serif" font-weight="bold" font-size="11.6" fill="#fff">A</text><text x="11" y="217.4" font-family="Liberation Sans,sans-serif" font-weight="bold" font-size="11.6" fill="#fff">E</text></svg>
<div style="left:371.5px;top:435.5px;width:212.5px;height:67px;background:transparent;box-sizing:border-box;border:1px solid #dcdcdc"></div>
<div style="left:378px;top:430px;width:66px;height:12px;background:#f0f0f0;"></div>
<span style="left:381px;top:427px;font-size:12px;line-height:16px;color:#000;word-spacing:1.2px">그려질 지점</span>
<div style="left:381px;top:453px;width:13px;height:13px;background:#fff;box-sizing:border-box;border:1px solid #6e6e6e;border-radius:50%"></div>
<span style="left:396px;top:451.5px;font-size:12px;line-height:16px;color:#000;word-spacing:1.2px">두 점 사이</span>
<div style="left:381px;top:483px;width:13px;height:13px;background:#fff;box-sizing:border-box;border:4px solid #0a64c4;border-radius:50%"></div>
<span style="left:396px;top:481.5px;font-size:12px;line-height:16px;color:#000;">중심점</span>
<span style="left:463.5px;top:468.5px;font-size:12px;line-height:16px;color:#000;word-spacing:1.4px">A: 길이:</span>
<div style="left:515px;top:467.5px;width:60px;height:17px;background:#fff;box-sizing:border-box;border:1px solid #7a7a7a;border-top-color:#5a5a5a"></div><span style="left:517.5px;top:467px;font-size:12px;line-height:16px;color:#000;letter-spacing:-1.1px">1000</span>
<span style="left:372.5px;top:512px;font-size:12px;line-height:16px;color:#000;word-spacing:1.4px">B: 상단 높이:</span>
<div style="left:451.5px;top:512.5px;width:132.5px;height:17px;background:#fff;box-sizing:border-box;border:1px solid #7a7a7a;border-top-color:#5a5a5a"></div><span style="left:454.0px;top:512px;font-size:12px;line-height:16px;color:#000;letter-spacing:-1.1px">600</span>
<span style="left:372.5px;top:537px;font-size:12px;line-height:16px;color:#000;word-spacing:1.4px">C: 하단 높이:</span>
<div style="left:452.5px;top:537.5px;width:131.5px;height:17px;background:#fff;box-sizing:border-box;border:1px solid #7a7a7a;border-top-color:#5a5a5a"></div><span style="left:455.0px;top:537px;font-size:12px;line-height:16px;color:#000;letter-spacing:-1.1px">1400</span>
<span style="left:372.5px;top:562.2px;font-size:12px;line-height:16px;color:#000;word-spacing:1.4px">D: 프레임 폭:</span>
<div style="left:451.5px;top:562px;width:132.5px;height:17px;background:#fff;box-sizing:border-box;border:1px solid #7a7a7a;border-top-color:#5a5a5a"></div><span style="left:454.0px;top:561.5px;font-size:12px;line-height:16px;color:#000;letter-spacing:-1.1px">40</span>
<span style="left:372.5px;top:587.2px;font-size:12px;line-height:16px;color:#000;word-spacing:1.4px">E: 프레임 두께:</span>
<div style="left:464px;top:587px;width:120px;height:17px;background:#fff;box-sizing:border-box;border:1px solid #7a7a7a;border-top-color:#5a5a5a"></div><span style="left:466.5px;top:586.5px;font-size:12px;line-height:16px;color:#000;letter-spacing:-1.1px">80</span>
<span style="left:372.5px;top:612.3px;font-size:12px;line-height:16px;color:#000;word-spacing:1.4px">유리 두께 (T):</span>
<div style="left:458px;top:612.5px;width:126px;height:17px;background:#fff;box-sizing:border-box;border:1px solid #7a7a7a;border-top-color:#5a5a5a"></div><span style="left:460.5px;top:612px;font-size:12px;line-height:16px;color:#000;letter-spacing:-1.1px">12</span>
<span style="left:372.5px;top:633px;font-size:12px;line-height:16px;color:#000;letter-spacing:0.22px">CYCAD FANTASMO</span>
<div style="left:447px;top:657.5px;width:62px;height:19px;background:#fdfdfd;box-sizing:border-box;border:1px solid #0a74d0;border-radius:4px"></div>
<span style="left:458px;top:658.5px;width:40px;text-align:center;font-size:12px;line-height:16px;color:#000;letter-spacing:-0.5px">확인</span>
<span style="left:229px;top:666.5px;font-size:12px;line-height:16px;color:#000;word-spacing:1.2px">그려질 높이:</span>
<div style="left:304px;top:667px;width:60px;height:17px;background:#fff;box-sizing:border-box;border:1px solid #7a7a7a;border-top-color:#5a5a5a"></div><span style="left:306.5px;top:666.5px;font-size:12px;line-height:16px;color:#000;letter-spacing:-1.1px">300</span>
<!-- cmdline -->
<div style="left:4px;top:721px;width:25px;height:58.8px;background:#2c3340;"></div>
<svg style="left:7.7px;top:725.9px;" width="18" height="5.2" viewBox="0 0 18 5.2"><rect x="0" y="0" width="1.9" height="1.9" fill="#f2f2f2"/><rect x="0" y="3.2" width="1.9" height="1.9" fill="#f2f2f2"/><rect x="3.09" y="0" width="1.9" height="1.9" fill="#f2f2f2"/><rect x="3.09" y="3.2" width="1.9" height="1.9" fill="#f2f2f2"/><rect x="6.18" y="0" width="1.9" height="1.9" fill="#f2f2f2"/><rect x="6.18" y="3.2" width="1.9" height="1.9" fill="#f2f2f2"/><rect x="9.27" y="0" width="1.9" height="1.9" fill="#f2f2f2"/><rect x="9.27" y="3.2" width="1.9" height="1.9" fill="#f2f2f2"/><rect x="12.36" y="0" width="1.9" height="1.9" fill="#f2f2f2"/><rect x="12.36" y="3.2" width="1.9" height="1.9" fill="#f2f2f2"/><rect x="15.45" y="0" width="1.9" height="1.9" fill="#f2f2f2"/><rect x="15.45" y="3.2" width="1.9" height="1.9" fill="#f2f2f2"/></svg>
<svg style="left:11px;top:739px;" width="10" height="10" viewBox="0 0 10 10"><path d="M1 1L9 9M9 1L1 9" stroke="#e8e8e8" stroke-width="1.9"/></svg>
<svg style="left:8px;top:760px;" width="17" height="17" viewBox="0 0 17 17"><path d="M1.6 15.4L9 7.2" stroke="#d8d8d8" stroke-width="3.3" stroke-linecap="round"/><path d="M14.6 1.2A4.2 4.2 0 1 0 15.8 6L12.6 6.6L10.6 4.6Z" fill="#d8d8d8"/></svg>
<div style="left:29px;top:721.6px;width:1113.3px;height:36.6px;background:#c8c8c8;box-sizing:border-box;border-top:1px solid #4a4f59;border-left:1px solid #9a9a9a"></div>
<span class="m" style="left:31px;top:727.2px;font-size:12px;line-height:14px;color:#111;letter-spacing:-0.17px">C:\Users\jeffy\AppData\Local\Temp\Drawing1_1_29790_17fcef6a.sv$(<i style="font-family:'Liberation Sans',sans-serif;font-size:12.85px;letter-spacing:0">으</i>)<i style="font-family:'Liberation Sans',sans-serif;font-size:12.85px;letter-spacing:0">로</i> <i style="font-family:'Liberation Sans',sans-serif;font-size:12.85px;letter-spacing:0">자동</i> <i style="font-family:'Liberation Sans',sans-serif;font-size:12.85px;letter-spacing:0">저장</i> ...</span>
<span class="m" style="left:31px;top:740.8px;font-size:12px;line-height:14px;color:#111;letter-spacing:-0.17px"><i style="font-family:'Liberation Sans',sans-serif;font-size:12.85px;letter-spacing:0">명령</i>:</span>
<div style="left:29px;top:758.2px;width:1113.3px;height:1px;background:#3a3f49;"></div>
<div style="left:29px;top:759.2px;width:1113.3px;height:19.8px;background:#ffffff;"></div>
<svg style="left:33px;top:763px;" width="16" height="12" viewBox="0 0 16 12"><rect x="0.5" y="0.5" width="14.6" height="10.6" fill="#f0f0f0" stroke="#555" stroke-width="1"/><rect x="0.5" y="0.5" width="14" height="2" fill="#8a8a8a"/><path d="M2.6 4.6L4.8 6.2L2.6 7.8M5.6 8.4H8.6" stroke="#333" stroke-width="0.9" fill="none"/></svg>
<svg style="left:51.8px;top:767.4000000000001px;" width="6" height="3.6" viewBox="0 0 6 3.6"><path d="M0 0H6L3.0 3.6Z" fill="#555"/></svg>
<span class="m" style="left:67px;top:760.5px;font-size:12px;line-height:16px;color:#787878;letter-spacing:0.4px;word-spacing:3px;transform:skewX(-13deg);transform-origin:0 50%">명령 입력</span>
<!-- statusbar -->
<svg style="left:45px;top:784px;" width="58" height="24.5" viewBox="0 0 58 24.5"><path d="M0 24.5L11 0H57L48.4 24.5Z" fill="#3b4453"/></svg>
<svg style="left:20px;top:790.0px;" width="16" height="13" viewBox="0 0 16 13"><path d="M0 1H16M0 6.5H16M0 12H16" stroke="#f0f0f0" stroke-width="1.7"/></svg>
<span class="k" style="left:62px;top:788px;font-size:12.5px;line-height:16px;color:#f4f4f4;">모형</span>
<span class="k" style="left:110px;top:788px;font-size:12.5px;line-height:16px;color:#e3e6ea;">배치1</span>
<svg style="left:149.0px;top:788.0px;" width="8" height="17" viewBox="0 0 8 17"><path d="M7 0L1 17" stroke="#4a5262" stroke-width="1.1"/></svg>
<span class="k" style="left:165px;top:788px;font-size:12.5px;line-height:16px;color:#e3e6ea;">배치2</span>
<svg style="left:204.0px;top:788.0px;" width="8" height="17" viewBox="0 0 8 17"><path d="M7 0L1 17" stroke="#4a5262" stroke-width="1.1"/></svg>
<svg style="left:222.0px;top:789.5px;" width="14" height="14" viewBox="0 0 14 14"><path d="M7.0 0V14M0 7.0H14" stroke="#f0f0f0" stroke-width="1.8"/></svg>
<svg style="left:246.0px;top:788.0px;" width="8" height="17" viewBox="0 0 8 17"><path d="M7 0L1 17" stroke="#4a5262" stroke-width="1.1"/></svg>
<div style="left:542px;top:786px;width:27px;height:23.5px;background:#3b4453;"></div>
<div style="left:572px;top:786px;width:64px;height:23.5px;background:#3b4453;"></div>
<div style="left:639px;top:786px;width:103.5px;height:23.5px;background:#3b4453;"></div>
<div style="left:745px;top:786px;width:63px;height:23.5px;background:#3b4453;"></div>
<div style="left:811.5px;top:786px;width:105.0px;height:23.5px;background:#3b4453;"></div>
<div style="left:920.5px;top:786px;width:82.0px;height:23.5px;background:#3b4453;"></div>
<div style="left:1005.5px;top:786px;width:23.0px;height:23.5px;background:#3b4453;"></div>
<div style="left:1031.5px;top:786px;width:23.5px;height:23.5px;background:#3b4453;"></div>
<div style="left:1058px;top:786px;width:30.5px;height:23.5px;background:#3b4453;"></div>
<div style="left:1091.5px;top:786px;width:23.5px;height:23.5px;background:#3b4453;"></div>
<div style="left:1117.5px;top:786px;width:23.5px;height:23.5px;background:#3b4453;"></div>
<span class="k" style="left:545px;top:789px;font-size:12px;line-height:16px;color:#f4f4f4;font-weight:bold">모형</span>
<div style="left:572.5px;top:787px;width:22.5px;height:21.8px;background:#5c8cc6;"></div>
<div style="left:597px;top:787px;width:22px;height:21.8px;background:#5c8cc6;"></div>
<svg style="left:575.5px;top:789.5px;" width="16" height="16" viewBox="0 0 16 16"><path d="M3.4 0.2V15.8M7.5 0.2V15.8M11.6 0.2V15.8M0 4.3H15.6M0 8.1H15.6M0 12H15.6" stroke="#fff" stroke-width="1.25"/></svg>
<svg style="left:602px;top:792.2px;" width="13" height="13" viewBox="0 0 13 13"><rect x="0" y="0" width="2" height="2" fill="#fff"/><rect x="0" y="4.85" width="2" height="2" fill="#fff"/><rect x="0" y="9.7" width="2" height="2" fill="#fff"/><rect x="4.9" y="0" width="2" height="2" fill="#fff"/><rect x="4.9" y="4.85" width="2" height="2" fill="#fff"/><rect x="4.9" y="9.7" width="2" height="2" fill="#fff"/><rect x="9.8" y="0" width="2" height="2" fill="#fff"/><rect x="9.8" y="4.85" width="2" height="2" fill="#fff"/><rect x="9.8" y="9.7" width="2" height="2" fill="#fff"/></svg>
<svg style="left:624.2px;top:796.4px;" width="7" height="4" viewBox="0 0 7 4"><path d="M0 0H7L3.5 4Z" fill="#e0e0e0"/></svg>
<div style="left:640px;top:787px;width:22px;height:21.8px;background:#5c8cc6;"></div>
<svg style="left:642.5px;top:789.5px;" width="17" height="17" viewBox="0 0 17 17"><path d="M1 0.4V15.6H16.4M1 11.4H5V15.6" fill="none" stroke="#fff" stroke-width="1.3"/></svg>
<svg style="left:666px;top:789.5px;" width="18" height="17" viewBox="0 0 18 17"><circle cx="7.6" cy="8.6" r="6.1" fill="none" stroke="#e6e6e6" stroke-width="1.2"/><path d="M8.6 9.2L15 1.2M8.4 9.2H17" stroke="#e6e6e6" stroke-width="1.2" fill="none"/></svg>
<svg style="left:691.1px;top:796.4px;" width="7" height="4" viewBox="0 0 7 4"><path d="M0 0H7L3.5 4Z" fill="#e0e0e0"/></svg>
<svg style="left:706px;top:789px;" width="17" height="18" viewBox="0 0 17 18"><path d="M8.4 1V16" stroke="#30d060" stroke-width="1.3"/><path d="M2 1.8L15 15" stroke="#e04040" stroke-width="1.2"/><rect x="7" y="7.2" width="2.8" height="2.8" fill="#fff" stroke="#333" stroke-width="0.5"/></svg>
<svg style="left:731.5px;top:796.4px;" width="7" height="4" viewBox="0 0 7 4"><path d="M0 0H7L3.5 4Z" fill="#e0e0e0"/></svg>
<div style="left:745px;top:787px;width:22.5px;height:21.8px;background:#5c8cc6;"></div>
<svg style="left:747.5px;top:789.5px;" width="18" height="17" viewBox="0 0 18 17"><path d="M0.6 14.2H16.6M0.8 14L12.8 2.4" stroke="#fff" stroke-width="1.4"/><rect x="5.6" y="6.8" width="3" height="3" fill="#fff"/></svg>
<svg style="left:771px;top:789.5px;" width="18" height="18" viewBox="0 0 18 18"><rect x="3.4" y="3" width="13.4" height="13" fill="none" stroke="#e8e8e8" stroke-width="1.2"/><rect x="1" y="1" width="4.2" height="4.2" fill="#3b4453" stroke="#f2a868" stroke-width="1.1"/></svg>
<svg style="left:796.3px;top:796.4px;" width="7" height="4" viewBox="0 0 7 4"><path d="M0 0H7L3.5 4Z" fill="#e0e0e0"/></svg>
<div style="left:812px;top:787px;width:22px;height:21.8px;background:#5c8cc6;"></div>
<svg style="left:814px;top:789.5px;" width="18" height="17" viewBox="0 0 18 17"><path d="M8 0.6L10.6 10.6L15 15.6L8 12.2L1 15.6L5.4 10.6Z" fill="#fff"/><circle cx="14.6" cy="3" r="2" fill="none" stroke="#fff" stroke-width="1"/></svg>
<svg style="left:838.5px;top:789.5px;" width="18" height="17" viewBox="0 0 18 17"><path d="M8 0.6L10.6 10.6L15 15.6L8 12.2L1 15.6L5.4 10.6Z" fill="#dcdcdc"/><path d="M13 1L11.6 4.2H14L12.4 7.4" fill="none" stroke="#dcdcdc" stroke-width="1.1"/></svg>
<svg style="left:863px;top:789.5px;" width="16" height="17" viewBox="0 0 16 17"><path d="M8 0.6L10.6 10.6L15 15.6L8 12.2L1 15.6L5.4 10.6Z" fill="#dcdcdc"/></svg>
<span style="left:887.5px;top:789.5px;font-size:11.5px;line-height:16px;color:#f0f0f0;letter-spacing:-0.6px">1:1</span>
<svg style="left:905.3px;top:796.4px;" width="7" height="4" viewBox="0 0 7 4"><path d="M0 0H7L3.5 4Z" fill="#e0e0e0"/></svg>
<svg style="left:923px;top:789.5px;" width="16" height="16" viewBox="0 0 16 16"><rect x="6.6" y="0" width="2.8" height="16" rx="0.6" fill="#dedede" transform="rotate(0 8 8)"/><rect x="6.6" y="0" width="2.8" height="16" rx="0.6" fill="#dedede" transform="rotate(45 8 8)"/><rect x="6.6" y="0" width="2.8" height="16" rx="0.6" fill="#dedede" transform="rotate(90 8 8)"/><rect x="6.6" y="0" width="2.8" height="16" rx="0.6" fill="#dedede" transform="rotate(135 8 8)"/><circle cx="8" cy="8" r="5.4" fill="#dedede"/><circle cx="8" cy="8" r="2.3" fill="#3b4453"/></svg>
<span style="left:948.8px;top:789.5px;font-size:12px;line-height:16px;color:#f0f0f0;letter-spacing:-0.5px">CYCAD</span>
<svg style="left:991.5px;top:796.4px;" width="7" height="4" viewBox="0 0 7 4"><path d="M0 0H7L3.5 4Z" fill="#e0e0e0"/></svg>
<svg style="left:1008.5px;top:789.0px;" width="17" height="17" viewBox="0 0 17 17"><path d="M8.5 0V17M0 8.5H17" stroke="#f2f2f2" stroke-width="1.6"/></svg>
<svg style="left:1034.5px;top:789.5px;" width="18" height="17" viewBox="0 0 18 17"><rect x="1" y="0.8" width="5.6" height="5.6" fill="none" stroke="#e6e6e6" stroke-width="1.1"/><circle cx="13" cy="7.6" r="3" fill="none" stroke="#e6e6e6" stroke-width="1.1"/><path d="M6.6 9.6L9.8 15.6H3.4Z" fill="none" stroke="#e6e6e6" stroke-width="1.1"/></svg>
<svg style="left:1064px;top:790px;" width="19" height="17" viewBox="0 0 19 17"><rect x="0" y="0" width="16" height="12.6" fill="#a0a0a0"/><path d="M0 9C2 9 3 2.6 5.4 2.6C8 2.6 8.6 9.6 11 9.6C12.6 9.6 13.6 5 16 5" fill="none" stroke="#444" stroke-width="1"/><circle cx="5.4" cy="2.8" r="0.9" fill="#4fb0ff"/><path d="M13 8L18 16.6H8Z" fill="#f08048"/><rect x="12.6" y="11" width="0.9" height="3" fill="#fff"/><rect x="12.6" y="14.6" width="0.9" height="0.9" fill="#fff"/></svg>
<svg style="left:1095px;top:791px;" width="16" height="13" viewBox="0 0 16 13"><rect x="0.6" y="0.6" width="14.8" height="11.8" fill="none" stroke="#e8e8e8" stroke-width="1.2"/><path d="M9 3H12.6V6.4M12.4 3.2L9.2 6.2M7 10H3.4V6.6M3.6 9.8L6.8 6.8" fill="none" stroke="#e8e8e8" stroke-width="1.1"/></svg>
<svg style="left:1121px;top:791.0px;" width="16" height="13" viewBox="0 0 16 13"><path d="M0 1H16M0 6.5H16M0 12H16" stroke="#f0f0f0" stroke-width="1.7"/></svg>
</div></div></body></html>
